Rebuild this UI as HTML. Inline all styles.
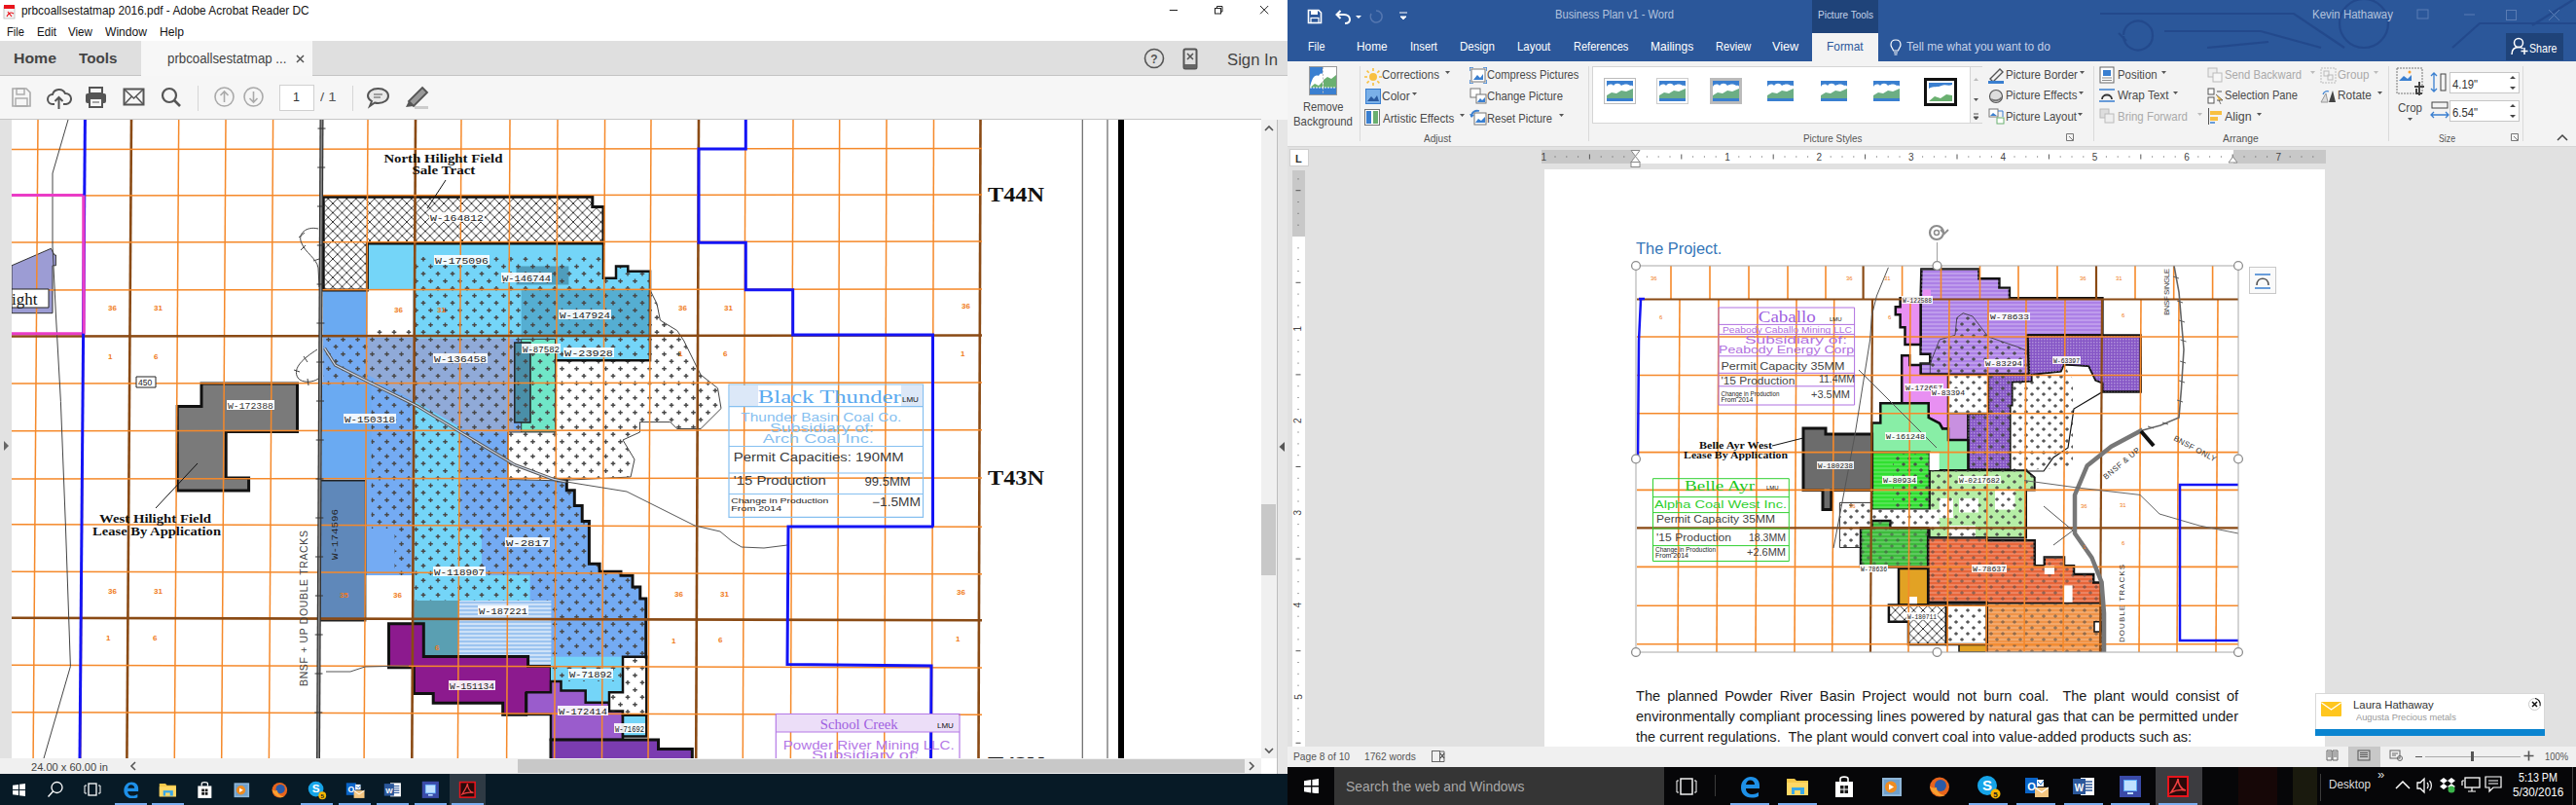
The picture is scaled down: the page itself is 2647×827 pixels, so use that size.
<!DOCTYPE html><html><head><meta charset="utf-8"><style>
html,body{margin:0;padding:0;width:2647px;height:827px;overflow:hidden;background:#fff;position:relative;font-family:"Liberation Sans",sans-serif}
div,svg{box-sizing:border-box}
</style></head><body>
<div style="position:absolute;left:0px;top:0px;width:1323px;height:42px;background:#ffffff;"></div>
<svg style="position:absolute;left:3px;top:4px;" width="14" height="16" viewBox="0 0 14 16"><rect x="1" y="3" width="11" height="12" fill="#f4f4f4" stroke="#bbb" stroke-width="0.8"/><rect x="1" y="1" width="11" height="4" fill="#e8141c"/><path d="M4 13 C6 9 8 8 11 10 M5 8 L9 13" stroke="#e8141c" stroke-width="1.2" fill="none"/></svg>
<div style="position:absolute;left:21.5px;top:5.3px;font-family:'Liberation Sans', sans-serif;font-size:12.2px;line-height:1;white-space:nowrap;color:#111;transform:scaleX(0.9720);transform-origin:0 0;">prbcoallsestatmap 2016.pdf - Adobe Acrobat Reader DC</div>
<svg style="position:absolute;left:1195px;top:0px;" width="125" height="24" viewBox="0 0 125 24"><path d="M6.8 10.5 H15" stroke="#222" stroke-width="1"/><rect x="53.5" y="8.5" width="6" height="5.5" fill="none" stroke="#222" stroke-width="1"/><path d="M55.5 8.5 V6.5 H61 V12 H59.5" fill="none" stroke="#222" stroke-width="1"/><path d="M100 6 L108.2 14.3 M108.2 6 L100 14.3" stroke="#222" stroke-width="1"/></svg>
<div style="position:absolute;left:6.5px;top:26.6px;font-family:'Liberation Sans', sans-serif;font-size:12.2px;line-height:1;white-space:nowrap;color:#111;transform:scaleX(0.9156);transform-origin:0 0;">File</div>
<div style="position:absolute;left:37.5px;top:26.6px;font-family:'Liberation Sans', sans-serif;font-size:12.2px;line-height:1;white-space:nowrap;color:#111;transform:scaleX(0.9513);transform-origin:0 0;">Edit</div>
<div style="position:absolute;left:70px;top:26.6px;font-family:'Liberation Sans', sans-serif;font-size:12.2px;line-height:1;white-space:nowrap;color:#111;transform:scaleX(0.9533);transform-origin:0 0;">View</div>
<div style="position:absolute;left:108px;top:26.6px;font-family:'Liberation Sans', sans-serif;font-size:12.2px;line-height:1;white-space:nowrap;color:#111;transform:scaleX(0.9910);transform-origin:0 0;">Window</div>
<div style="position:absolute;left:164px;top:26.6px;font-family:'Liberation Sans', sans-serif;font-size:12.2px;line-height:1;white-space:nowrap;color:#111;transform:scaleX(0.9963);transform-origin:0 0;">Help</div>
<div style="position:absolute;left:0px;top:42px;width:1323px;height:36px;background:#dfdfdf;"></div>
<div style="position:absolute;left:0px;top:77px;width:1323px;height:1px;background:#c4c4c4;"></div>
<div style="position:absolute;left:145px;top:42px;width:176px;height:36px;background:#f7f7f7;"></div>
<div style="position:absolute;left:13.5px;top:52.3px;font-family:'Liberation Sans', sans-serif;font-size:15px;line-height:1;white-space:nowrap;color:#444;transform:scaleX(1.0558);transform-origin:0 0;font-weight:bold">Home</div>
<div style="position:absolute;left:80.5px;top:52.3px;font-family:'Liberation Sans', sans-serif;font-size:15px;line-height:1;white-space:nowrap;color:#444;transform:scaleX(1.0132);transform-origin:0 0;font-weight:bold">Tools</div>
<div style="position:absolute;left:172px;top:53.1px;font-family:'Liberation Sans', sans-serif;font-size:14px;line-height:1;white-space:nowrap;color:#444;transform:scaleX(0.9476);transform-origin:0 0;">prbcoallsestatmap ...</div>
<svg style="position:absolute;left:303px;top:55px;" width="12" height="12" viewBox="0 0 12 12"><path d="M2 2 L9 9 M9 2 L2 9" stroke="#555" stroke-width="1.5"/></svg>
<svg style="position:absolute;left:1174px;top:48px;" width="24" height="24" viewBox="0 0 24 24"><circle cx="12" cy="12" r="9.5" fill="none" stroke="#555" stroke-width="1.6"/><text x="12" y="16.5" font-family="Liberation Sans" font-size="12" font-weight="bold" fill="#555" text-anchor="middle">?</text></svg>
<svg style="position:absolute;left:1214px;top:49px;" width="20" height="24" viewBox="0 0 20 24"><rect x="2.5" y="1.5" width="13" height="20" rx="1.5" fill="none" stroke="#555" stroke-width="2"/><rect x="3" y="17" width="12" height="4" fill="#666"/><path d="M6 6 L12 12 M12 6 L6 12" stroke="#555" stroke-width="1.6"/></svg>
<div style="position:absolute;left:1261px;top:53.5px;font-family:'Liberation Sans', sans-serif;font-size:16px;line-height:1;white-space:nowrap;color:#444;transform:scaleX(1.0439);transform-origin:0 0;">Sign In</div>
<div style="position:absolute;left:0px;top:78px;width:1323px;height:45px;background:#f6f6f6;"></div>
<div style="position:absolute;left:0px;top:122px;width:1296px;height:1px;background:#c6c6c6;"></div>
<svg style="position:absolute;left:10px;top:88px;" width="24" height="24" viewBox="0 0 24 24"><path d="M3 3 H17 L21 7 V21 H3 Z" fill="none" stroke="#aaa" stroke-width="1.6"/><rect x="7" y="3" width="8" height="6" fill="none" stroke="#aaa" stroke-width="1.4"/><rect x="6" y="13" width="12" height="8" fill="none" stroke="#aaa" stroke-width="1.4"/></svg>
<svg style="position:absolute;left:48px;top:88px;" width="26" height="26" viewBox="0 0 26 26"><path d="M8 19 H6 A5 5 0 0 1 6 9 A7 7 0 0 1 19 8 A5 5 0 0 1 20 19 H17" fill="none" stroke="#555" stroke-width="2"/><path d="M12.5 24 V12 M8.5 16 L12.5 12 L16.5 16" fill="none" stroke="#555" stroke-width="2"/></svg>
<svg style="position:absolute;left:86px;top:88px;" width="26" height="24" viewBox="0 0 26 24"><rect x="6" y="2" width="13" height="6" fill="none" stroke="#555" stroke-width="2"/><rect x="2" y="8" width="21" height="10" rx="2" fill="#555"/><rect x="6" y="13" width="13" height="9" fill="#f6f6f6" stroke="#555" stroke-width="2"/><path d="M9 17 H16" stroke="#555" stroke-width="1"/></svg>
<svg style="position:absolute;left:126px;top:90px;" width="24" height="20" viewBox="0 0 24 20"><rect x="1.5" y="1.5" width="20" height="16" fill="none" stroke="#555" stroke-width="2"/><path d="M2 2 L11.5 11 L21 2 M2 17 L9 9.5 M21 17 L14 9.5" fill="none" stroke="#555" stroke-width="1.5"/></svg>
<svg style="position:absolute;left:164px;top:88px;" width="24" height="24" viewBox="0 0 24 24"><circle cx="10" cy="10" r="7" fill="none" stroke="#555" stroke-width="2.2"/><path d="M15 15 L21 21" stroke="#555" stroke-width="2.6"/></svg>
<div style="position:absolute;left:203px;top:88px;width:1px;height:26px;background:#d6d6d6;"></div>
<svg style="position:absolute;left:219px;top:88px;" width="24" height="24" viewBox="0 0 24 24"><circle cx="11.5" cy="11.5" r="9.5" fill="none" stroke="#aaa" stroke-width="1.6"/><path d="M11.5 17 V6 M7.5 10 L11.5 6 L15.5 10" fill="none" stroke="#aaa" stroke-width="1.6"/></svg>
<svg style="position:absolute;left:249px;top:88px;" width="24" height="24" viewBox="0 0 24 24"><circle cx="11.5" cy="11.5" r="9.5" fill="none" stroke="#aaa" stroke-width="1.6"/><path d="M11.5 6 V17 M7.5 13 L11.5 17 L15.5 13" fill="none" stroke="#aaa" stroke-width="1.6"/></svg>
<div style="position:absolute;left:287px;top:87px;width:36px;height:27px;background:#ffffff;border:1px solid #d0d0d0"></div>
<div style="position:absolute;left:301px;top:94.4px;font-family:'Liberation Sans', sans-serif;font-size:12.5px;line-height:1;white-space:nowrap;color:#333;">1</div>
<div style="position:absolute;left:329px;top:94.4px;font-family:'Liberation Sans', sans-serif;font-size:12.5px;line-height:1;white-space:nowrap;color:#555;transform:scaleX(1.1945);transform-origin:0 0;">/ 1</div>
<div style="position:absolute;left:362px;top:88px;width:1px;height:26px;background:#d6d6d6;"></div>
<svg style="position:absolute;left:376px;top:88px;" width="26" height="24" viewBox="0 0 26 24"><path d="M12.5 3 C19 3 23 6.5 23 10.5 C23 14.5 19 18 12.5 18 C11 18 10 17.8 9 17.5 L4 21 L6 16 C3.5 14.5 2 12.7 2 10.5 C2 6.5 6 3 12.5 3 Z" fill="#e8e8e8" stroke="#555" stroke-width="2"/><path d="M8 9 H17 M8 12 H15" stroke="#555" stroke-width="1.2"/></svg>
<svg style="position:absolute;left:414px;top:88px;" width="28" height="26" viewBox="0 0 28 26"><path d="M20 2 L25 7 L11 21 L6 16 Z" fill="#999" stroke="#555" stroke-width="1.8"/><path d="M6 16 L3 22 L11 21" fill="#555"/><rect x="12" y="21" width="14" height="3" fill="#ccc"/></svg>
<div style="position:absolute;left:0px;top:123px;width:12px;height:656px;background:#e2e2e2;"></div>
<svg style="position:absolute;left:3px;top:452px;" width="8" height="12" viewBox="0 0 8 12"><path d="M1 1 L6 6 L1 11 Z" fill="#666"/></svg>
<div style="position:absolute;left:1296px;top:123px;width:16px;height:656px;background:#f0f0f0;"></div>
<div style="position:absolute;left:1296px;top:518px;width:15px;height:73px;background:#c8c8c8;"></div>
<svg style="position:absolute;left:1298px;top:127px;" width="12" height="10" viewBox="0 0 12 10"><path d="M2 7 L6 3 L10 7" fill="none" stroke="#555" stroke-width="1.6"/></svg>
<svg style="position:absolute;left:1298px;top:766px;" width="12" height="10" viewBox="0 0 12 10"><path d="M2 3 L6 7 L10 3" fill="none" stroke="#555" stroke-width="1.6"/></svg>
<div style="position:absolute;left:1312px;top:123px;width:11px;height:672px;background:#e6e6e6;"></div>
<div style="position:absolute;left:1312px;top:123px;width:1px;height:672px;background:#bdbdbd;"></div>
<svg style="position:absolute;left:1313px;top:452px;" width="10" height="14" viewBox="0 0 10 14"><path d="M7 2 L1.5 7 L7 12 Z" fill="#555"/></svg>
<div style="position:absolute;left:0px;top:779px;width:1323px;height:16px;background:#f0f0f0;"></div>
<div style="position:absolute;left:31.6px;top:782.5px;font-family:'Liberation Sans', sans-serif;font-size:11.2px;line-height:1;white-space:nowrap;color:#444;transform:scaleX(0.9911);transform-origin:0 0;">24.00 x 60.00 in</div>
<svg style="position:absolute;left:131px;top:781px;" width="12" height="12" viewBox="0 0 12 12"><path d="M8 2 L4 6 L8 10" fill="none" stroke="#555" stroke-width="1.6"/></svg>
<div style="position:absolute;left:532px;top:780px;width:747px;height:14px;background:#c8c8c8;"></div>
<svg style="position:absolute;left:1280px;top:781px;" width="12" height="12" viewBox="0 0 12 12"><path d="M4 2 L8 6 L4 10" fill="none" stroke="#555" stroke-width="1.6"/></svg>
<div style="position:absolute;left:1296px;top:779px;width:16px;height:16px;background:#ffffff;"></div>
<div style="position:absolute;left:1312px;top:779px;width:11px;height:16px;background:#e6e6e6;"></div>
<div style="position:absolute;left:1312px;top:779px;width:1px;height:16px;background:#bdbdbd;"></div>
<div style="position:absolute;left:0px;top:795px;width:1323px;height:32px;background:#071a26;"></div>
<svg style="position:absolute;left:12.5px;top:805px;" width="13" height="13" viewBox="0 0 13 13"><path d="M0 1.8 L6.0 0.9 V6.0 H0 Z M7.0 0.8 L13 0 V6.0 H7.0 Z M0 7.0 H6.0 V12.1 L0 11.2 Z M7.0 7.0 H13 V13 L7.0 12.2 Z" fill="#fff"/></svg>
<svg style="position:absolute;left:48px;top:802px;" width="18" height="18" viewBox="0 0 18 18"><circle cx="10.5" cy="7" r="5.5" fill="none" stroke="#fff" stroke-width="1.3"/><path d="M6.5 11 L1.5 16.5" stroke="#fff" stroke-width="1.4"/></svg>
<svg style="position:absolute;left:86px;top:804px;" width="18" height="14" viewBox="0 0 18 14"><rect x="5" y="1" width="8" height="12" fill="none" stroke="#fff" stroke-width="1.3"/><path d="M3 3 H1 V11 H3 M15 3 H17 V11 H15" fill="none" stroke="#fff" stroke-width="1"/></svg>
<div style="position:absolute;left:462px;top:795px;width:37px;height:32px;background:#2e3a44;"></div>
<svg style="position:absolute;left:124.6px;top:801.5px;" width="18.7" height="18.7" viewBox="0 0 24 24"><path d="M3 13 C3 6 8 2 13 2 C19 2 22 6 22 11 V14 H8 C8 18 11 20 15 20 C17 20 19 19 21 18 V22 C19 23 17 23.5 14 23.5 C7 23.5 3 19 3 13 Z M8 10 H17 C17 7 15 5.5 12.5 5.5 C10 5.5 8.5 7.5 8 10 Z" fill="#1e90e8"/></svg>
<svg style="position:absolute;left:162.6px;top:801.5px;" width="18.7" height="18.7" viewBox="0 0 24 24"><path d="M1 4 H9 L11 6 H23 V21 H1 Z" fill="#f5c84a"/><rect x="1" y="8" width="22" height="13" fill="#ffd866"/><rect x="6" y="13" width="13" height="7" fill="#3aa8e8"/><rect x="9" y="16" width="6" height="4" fill="#ffd866"/></svg>
<svg style="position:absolute;left:200.6px;top:801.5px;" width="18.7" height="18.7" viewBox="0 0 24 24"><path d="M3 7 H21 V23 H3 Z" fill="#fff"/><path d="M8 7 V4 C8 1.5 16 1.5 16 4 V7" fill="none" stroke="#fff" stroke-width="1.6"/><path d="M8 11 H11.5 V14.5 H8 Z M12.5 11 H16 V14.5 H12.5 Z M8 15.5 H11.5 V19 H8 Z M12.5 15.5 H16 V19 H12.5 Z" fill="#1a1a1a"/></svg>
<svg style="position:absolute;left:238.6px;top:801.5px;" width="18.7" height="18.7" viewBox="0 0 24 24"><rect x="2" y="3" width="20" height="19" fill="#8fb6d8"/><rect x="4" y="5" width="16" height="15" fill="#6fa0cc"/><circle cx="11" cy="12.5" r="6" fill="#f08c20"/><path d="M9 9.5 L14 12.5 L9 15.5 Z" fill="#fff"/></svg>
<svg style="position:absolute;left:277.6px;top:801.5px;" width="18.7" height="18.7" viewBox="0 0 24 24"><circle cx="12" cy="12.5" r="10" fill="#e8641c"/><circle cx="13" cy="11" r="6" fill="#2a5aa8"/><path d="M2 12 C4 20 12 24 18 21 C14 21 9 18 9 13 C6 14 4 13 2 12 Z" fill="#f8a030"/></svg>
<svg style="position:absolute;left:316.1px;top:801.5px;" width="20.3" height="20.3" viewBox="0 0 26 26"><circle cx="11" cy="11" r="10" fill="#16a4e8"/><text x="11" y="16" font-family="Liberation Sans" font-size="15" font-weight="bold" fill="#fff" text-anchor="middle">S</text><circle cx="19.5" cy="19.5" r="5" fill="#f7b400"/><text x="19.5" y="22.5" font-family="Liberation Sans" font-size="8" font-weight="bold" fill="#222" text-anchor="middle">5</text></svg>
<svg style="position:absolute;left:355.1px;top:801.5px;" width="20.3" height="18.7" viewBox="0 0 26 24"><rect x="1" y="3" width="13" height="16" fill="#0a64c8"/><text x="7.5" y="15.5" font-family="Liberation Sans" font-size="11" font-weight="bold" fill="#fff" text-anchor="middle">O</text><rect x="13" y="5" width="7" height="7" fill="#fff"/><path d="M14 7 L17 10 L20 6" stroke="#0a64c8" fill="none"/><rect x="11" y="13" width="14" height="10" fill="#f4c680"/><path d="M11 13 L18 18 L25 13" stroke="#fff" fill="none" stroke-width="1.2"/></svg>
<svg style="position:absolute;left:394.0px;top:801.5px;" width="18.7" height="18.7" viewBox="0 0 24 24"><rect x="9" y="3" width="14" height="18" fill="#fff"/><path d="M11 7 H21 M11 10 H21 M11 13 H21 M11 16 H21" stroke="#2b579a" stroke-width="1.4"/><rect x="1" y="4" width="13" height="16" fill="#2b579a"/><text x="7.5" y="16.5" font-family="Liberation Sans" font-size="10" font-weight="bold" fill="#fff" text-anchor="middle">W</text></svg>
<svg style="position:absolute;left:432.6px;top:801.5px;" width="18.7" height="18.7" viewBox="0 0 24 24"><rect x="1" y="1" width="22" height="22" fill="#3a4aa8"/><rect x="5" y="5" width="14" height="12" fill="#5aa8f8"/><rect x="6" y="6" width="12" height="10" fill="#bfe0ff"/><path d="M9 19 H15" stroke="#bfe0ff" stroke-width="2"/></svg>
<svg style="position:absolute;left:470.6px;top:801.5px;" width="18.7" height="18.7" viewBox="0 0 24 24"><rect x="1" y="1" width="22" height="22" fill="#e8141c"/><rect x="3" y="3" width="18" height="18" fill="#2a0a0a"/><path d="M5 18 C9 12 12 6 12 4 C12 9 15 15 20 16 C15 15 9 16 5 18 Z" fill="none" stroke="#f04040" stroke-width="1.6"/></svg>
<div style="position:absolute;left:117.5px;top:825px;width:33px;height:2px;background:#7aaef0;"></div>
<div style="position:absolute;left:155.5px;top:825px;width:33px;height:2px;background:#7aaef0;"></div>
<div style="position:absolute;left:309.0px;top:825px;width:33px;height:2px;background:#7aaef0;"></div>
<div style="position:absolute;left:348.0px;top:825px;width:33px;height:2px;background:#7aaef0;"></div>
<div style="position:absolute;left:386.9px;top:825px;width:33px;height:2px;background:#7aaef0;"></div>
<div style="position:absolute;left:425.5px;top:825px;width:33px;height:2px;background:#7aaef0;"></div>
<div style="position:absolute;left:463.5px;top:825px;width:33px;height:2px;background:#7aaef0;"></div>
<svg style="position:absolute;left:12px;top:123px;overflow:hidden" width="1284" height="656" viewBox="12 123 1284 656"><defs>
<pattern id="Lcross" width="15" height="15" patternUnits="userSpaceOnUse">
<path d="M7.5 1.5 V6 M5.2 3.75 H9.8 M0 9 V13.5 M-2.3 11.25 H2.3 M15 9 V13.5 M12.7 11.25 H17.3" stroke="#484848" stroke-width="1.5"/></pattern>
<pattern id="Lhatch" width="9.5" height="9.5" patternUnits="userSpaceOnUse">
<path d="M0 0 L9.5 9.5 M9.5 0 L0 9.5" stroke="#222" stroke-width="0.9"/></pattern>
<pattern id="Lstripe" width="6" height="4" patternUnits="userSpaceOnUse">
<path d="M0 1 H6" stroke="#ffffff" stroke-width="1"/></pattern>
<pattern id="Ldots" width="3" height="3" patternUnits="userSpaceOnUse">
<rect x="0" y="0" width="1.5" height="1.5" fill="#ffffff" opacity="0.7"/></pattern>
</defs><rect x="12" y="123" width="1284" height="656" fill="#fff"/><polygon points="12.0,272.8 52.4,255.3 56.0,262.0 57.4,262.0 57.4,272.8 54.0,272.8 54.0,321.7 12.0,321.7" fill="#9c9cd4" stroke="#333" stroke-width="1" /><polygon points="207.0,394.0 305.5,394.0 305.5,443.5 232.2,443.5 232.2,491.0 255.6,491.0 255.6,503.9 182.2,503.9 182.2,417.6 207.0,417.6" fill="#7a7a7a" stroke="#111" stroke-width="3" /><polygon points="332.2,297.9 377.4,297.9 377.4,250.0 620.0,250.0 620.0,285.7 633.0,285.7 633.0,273.5 645.3,273.5 645.3,278.7 668.0,278.7 668.0,370.2 570.5,370.2 570.5,444.0 521.7,444.0 521.7,492.4 570.4,493.8 582.3,493.8 582.3,503.7 590.3,503.7 590.3,519.6 598.2,519.6 598.2,535.5 605.4,535.5 605.4,579.2 616.1,579.2 616.1,587.2 638.0,587.2 638.0,591.2 650.0,591.2 650.0,603.1 657.8,603.1 657.8,615.0 663.8,615.0 663.8,676.6 566.4,676.6 566.4,682.6 471.0,682.6 471.0,674.6 425.3,674.6 425.3,591.0 375.6,591.0 375.6,492.4 330.5,492.4" fill="#74abf3" stroke="none" stroke-width="0" /><polygon points="377.4,250.0 620.0,250.0 620.0,285.7 633.0,285.7 633.0,273.5 645.3,273.5 645.3,278.7 668.0,278.7 668.0,370.2 570.5,370.2 570.5,348.0 424.4,348.0 424.4,297.9 377.4,297.9" fill="#74d5f8" stroke="none" stroke-width="0" /><polygon points="535.7,297.9 668.0,297.9 668.0,346.6 535.7,346.6" fill="#55aed2" stroke="none" stroke-width="0" /><polygon points="530.5,273.5 584.4,273.5 584.4,292.6 530.5,292.6" fill="#4f9dbc" stroke="none" stroke-width="0" /><polygon points="377.4,297.9 424.4,297.9 424.4,346.6 377.4,346.6" fill="#ffffff" stroke="none" stroke-width="0" /><polygon points="332.2,297.9 377.4,297.9 377.4,346.6 332.2,346.6" fill="#6aaaf2" stroke="none" stroke-width="0" /><polygon points="330.5,395.5 381.5,395.5 381.5,492.4 330.5,492.4" fill="#6aaaf2" stroke="none" stroke-width="0" /><polygon points="377.0,347.8 528.0,347.8 528.0,444.6 484.0,444.6 377.0,384.6" fill="#90aad8" stroke="none" stroke-width="0" /><polygon points="424.6,411.6 473.2,439.2 473.2,543.5 494.9,543.5 494.9,591.0 544.6,591.0 544.6,617.0 425.3,617.0" fill="#74d5f8" stroke="none" stroke-width="0" /><polygon points="535.7,348.3 570.5,348.3 570.5,444.0 535.7,444.0" fill="#70e6c8" stroke="#333" stroke-width="1" /><polygon points="528.8,352.0 545.0,352.0 545.0,434.0 528.8,434.0" fill="#4a8fa8" stroke="#222" stroke-width="1.5" /><polygon points="328.7,493.8 375.6,493.8 375.6,637.7 328.7,637.7" fill="#5f88ba" stroke="#222" stroke-width="1.5" /><polygon points="471.0,617.0 566.4,617.0 566.4,682.6 471.0,682.6" fill="#9cc4f0" stroke="none" stroke-width="0" /><polygon points="471.0,617.0 566.4,617.0 566.4,682.6 471.0,682.6" fill="url(#Lstripe)" stroke="none" stroke-width="0" /><polygon points="425.3,617.0 471.0,617.0 471.0,674.6 425.3,674.6" fill="#5a9fb2" stroke="none" stroke-width="0" /><polygon points="332.2,346.6 668.0,346.6 668.0,370.2 570.5,370.2 570.5,444.0 521.7,444.0 521.7,492.4 570.4,493.8 582.3,493.8 582.3,503.7 590.3,503.7 590.3,519.6 598.2,519.6 598.2,535.5 605.4,535.5 605.4,579.2 616.1,579.2 616.1,587.2 638.0,587.2 638.0,591.2 650.0,591.2 650.0,603.1 657.8,603.1 657.8,615.0 663.8,615.0 663.8,676.6 566.4,676.6 566.4,617.0 425.3,617.0 425.3,591.0 405.5,591.0 405.5,543.0 381.5,543.0 381.5,395.5 332.2,395.5" fill="url(#Lcross)" stroke="none" stroke-width="0" /><polygon points="424.4,262.0 620.0,262.0 620.0,285.7 633.0,285.7 633.0,273.5 645.3,273.5 645.3,278.7 668.0,278.7 668.0,346.6 424.4,346.6" fill="url(#Lcross)" stroke="none" stroke-width="0" /><polygon points="570.5,370.2 668.0,370.2 668.0,298.0 675.0,312.0 678.4,329.0 695.8,339.6 702.7,350.0 720.0,385.0 737.5,398.8 741.0,419.6 720.0,440.5 695.8,440.5 688.8,433.6 657.5,433.6 657.5,444.0 640.0,452.0 652.0,472.0 648.0,490.0 570.4,493.8 521.7,492.4 521.7,444.0 570.5,444.0" fill="#ffffff" stroke="#444" stroke-width="1" /><polygon points="570.5,370.2 668.0,370.2 668.0,298.0 675.0,312.0 678.4,329.0 695.8,339.6 702.7,350.0 720.0,385.0 737.5,398.8 741.0,419.6 720.0,440.5 695.8,440.5 688.8,433.6 657.5,433.6 657.5,444.0 640.0,452.0 652.0,472.0 648.0,490.0 570.4,493.8 521.7,492.4 521.7,444.0 570.5,444.0" fill="url(#Lcross)" stroke="none" stroke-width="0" /><polygon points="377.4,337.0 424.4,337.0 424.4,346.6 377.4,346.6" fill="url(#Lcross)" stroke="none" stroke-width="0" /><polygon points="399.5,640.8 435.3,640.8 435.3,674.6 542.6,674.6 542.6,684.6 566.4,684.6 566.4,712.4 540.6,712.4 540.6,734.2 516.7,734.2 516.7,722.3 445.2,722.3 445.2,712.4 425.3,712.4 425.3,685.8 399.5,685.8" fill="#8c1a8e" stroke="#111" stroke-width="3" /><polygon points="566.0,674.8 664.3,674.8 664.3,700.0 640.0,700.0 640.0,711.3 626.0,711.3 626.0,721.7 601.7,721.7 601.7,709.6 576.5,709.6 576.5,700.0 566.0,700.0" fill="#74d5f8" stroke="none" stroke-width="0" /><polygon points="566.0,684.0 640.0,684.0 640.0,700.0 566.0,700.0" fill="url(#Lcross)" stroke="none" stroke-width="0" /><polygon points="541.0,711.3 566.0,711.3 566.0,700.0 576.5,700.0 576.5,709.6 601.7,709.6 601.7,721.7 626.0,721.7 626.0,730.4 640.0,730.4 640.0,760.0 566.0,760.0 566.0,734.0 541.0,734.0" fill="#9a5ccc" stroke="#111" stroke-width="2.5" /><polygon points="640.0,674.8 664.3,674.8 664.3,734.8 640.0,734.8 640.0,730.4 626.0,730.4 626.0,711.3 640.0,711.3" fill="#ffffff" stroke="#111" stroke-width="2.5" /><polygon points="640.0,674.8 664.3,674.8 664.3,734.8 640.0,734.8 640.0,730.4 626.0,730.4 626.0,711.3 640.0,711.3" fill="url(#Lcross)" stroke="none" stroke-width="0" /><polygon points="640.0,734.8 664.3,734.8 664.3,756.5 640.0,756.5" fill="#74d5f8" stroke="#111" stroke-width="2.5" /><polygon points="566.0,760.0 676.5,760.0 676.5,769.6 711.3,769.6 711.3,781.0 566.0,781.0" fill="#7b3cb0" stroke="#111" stroke-width="3" /><polygon points="332.2,202.2 608.8,202.2 608.8,212.6 620.0,212.6 620.0,250.0 377.4,250.0 377.4,297.9 332.2,297.9" fill="#ffffff" stroke="none" stroke-width="0" /><polygon points="332.2,202.2 608.8,202.2 608.8,212.6 620.0,212.6 620.0,250.0 377.4,250.0 377.4,297.9 332.2,297.9" fill="url(#Lhatch)" stroke="#111" stroke-width="3" /><polyline points="620.0,250.0 620.0,285.7 633.0,285.7 633.0,273.5 645.3,273.5 645.3,278.7 668.0,278.7 668.0,370.2 570.5,370.2" fill="none" stroke="#111" stroke-width="2.5" /><polyline points="570.4,493.8 582.3,493.8 582.3,503.7 590.3,503.7 590.3,519.6 598.2,519.6 598.2,535.5 605.4,535.5 605.4,579.2 616.1,579.2 616.1,587.2 638.0,587.2 638.0,591.2 650.0,591.2 650.0,603.1 657.8,603.1 657.8,615.0 663.8,615.0 663.8,676.6" fill="none" stroke="#111" stroke-width="3" /><path d="M39.0 123 L34.1 779" stroke="#f5892a" stroke-width="1.5"/><path d="M87.4 123 L82.7 779" stroke="#f5892a" stroke-width="1.5"/><path d="M135.0 123 L130.4 779" stroke="#8a4a14" stroke-width="2.6"/><path d="M183.7 123 L179.3 779" stroke="#f5892a" stroke-width="1.5"/><path d="M232.0 123 L227.7 779" stroke="#f5892a" stroke-width="1.5"/><path d="M280.6 123 L276.4 779" stroke="#f5892a" stroke-width="1.5"/><path d="M378.0 123 L374.1 779" stroke="#f5892a" stroke-width="1.5"/><path d="M427.0 123 L423.3 779" stroke="#8a4a14" stroke-width="2.6"/><path d="M474.0 123 L470.4 779" stroke="#f5892a" stroke-width="1.5"/><path d="M524.0 123 L520.6 779" stroke="#f5892a" stroke-width="1.5"/><path d="M573.0 123 L569.7 779" stroke="#f5892a" stroke-width="1.5"/><path d="M621.6 123 L618.5 779" stroke="#f5892a" stroke-width="1.5"/><path d="M669.0 123 L666.0 779" stroke="#f5892a" stroke-width="1.5"/><path d="M718.0 123 L715.2 779" stroke="#8a4a14" stroke-width="2.6"/><path d="M766.0 123 L763.3 779" stroke="#f5892a" stroke-width="1.5"/><path d="M815.0 123 L812.4 779" stroke="#f5892a" stroke-width="1.5"/><path d="M862.7 123 L860.3 779" stroke="#f5892a" stroke-width="1.5"/><path d="M911.0 123 L908.7 779" stroke="#f5892a" stroke-width="1.5"/><path d="M959.5 123 L957.4 779" stroke="#f5892a" stroke-width="1.5"/><path d="M1007.5 123 L1005.5 779" stroke="#8a4a14" stroke-width="2.6"/><path d="M12 153.5 L1009 152.5" stroke="#f5892a" stroke-width="1.5"/><path d="M12 200.9 L1009 199.9" stroke="#f5892a" stroke-width="1.5"/><path d="M12 249.1 L1009 248.1" stroke="#f5892a" stroke-width="1.5"/><path d="M12 298.0 L1009 297.0" stroke="#f5892a" stroke-width="1.5"/><path d="M12 345.5 L1009 344.5" stroke="#8a4a14" stroke-width="2.6"/><path d="M12 394.0 L1009 393.0" stroke="#f5892a" stroke-width="1.5"/><path d="M12 442.8 L1009 441.8" stroke="#f5892a" stroke-width="1.5"/><path d="M12 491.9 L1009 490.9" stroke="#f5892a" stroke-width="1.5"/><path d="M12 538.7 L1009 541.3" stroke="#f5892a" stroke-width="1.5"/><path d="M12 587.2 L1009 589.8" stroke="#f5892a" stroke-width="1.5"/><path d="M12 634.7 L1009 637.3" stroke="#8a4a14" stroke-width="2.6"/><path d="M12 683.3 L1009 685.9" stroke="#f5892a" stroke-width="1.5"/><path d="M12 731.7 L1009 734.3" stroke="#f5892a" stroke-width="1.5"/><polyline points="70.0,123.0 54.0,178.0 54.0,253.0 57.4,323.0 62.4,412.6 67.4,540.0 72.4,684.6 45.0,779.0" fill="none" stroke="#444" stroke-width="1" /><polyline points="333.5,357.6 344.5,375.0 379.4,392.6 429.4,417.5 479.0,447.5 529.0,477.5 569.0,492.4 581.6,495.0" fill="none" stroke="#555" stroke-width="3.2" /><polyline points="333.5,357.6 344.5,375.0 379.4,392.6 429.4,417.5 479.0,447.5 529.0,477.5 569.0,492.4 581.6,495.0" fill="none" stroke="#cfd8e8" stroke-width="1.2" /><polyline points="582.0,495.0 644.0,505.0 714.0,540.0 740.0,546.0 752.0,556.0 762.0,562.0 785.0,563.0 809.0,560.0" fill="none" stroke="#555" stroke-width="1" /><polyline points="335.0,690.0 360.0,690.0 375.0,685.0 420.0,684.0" fill="none" stroke="#555" stroke-width="1" /><path d="M327 235 C315 232 305 240 310 250 C314 260 325 265 327 275 L328 295" fill="none" stroke="#444" stroke-width="1"/><path d="M307 244 L313 239 M309 257 L314 252 M322 268 L328 266" stroke="#444" stroke-width="1"/><path d="M326 359 C312 368 300 378 306 388 C310 394 322 393 327 389" fill="none" stroke="#444" stroke-width="1"/><path d="M312 366 L316 372 M302 380 L308 382 M316 389 L317 396" stroke="#444" stroke-width="1"/><path d="M330.5 123 L327 779" stroke="#333" stroke-width="4"/><path d="M330.5 123 L327 779" stroke="#888" stroke-width="1.6"/><path d="M326.5 132 H334.5" stroke="#333" stroke-width="1"/><path d="M326.2 172 H334.2" stroke="#333" stroke-width="1"/><path d="M326.0 212 H334.0" stroke="#333" stroke-width="1"/><path d="M325.8 252 H333.8" stroke="#333" stroke-width="1"/><path d="M325.6 292 H333.6" stroke="#333" stroke-width="1"/><path d="M325.4 332 H333.4" stroke="#333" stroke-width="1"/><path d="M325.2 372 H333.2" stroke="#333" stroke-width="1"/><path d="M325.0 412 H333.0" stroke="#333" stroke-width="1"/><path d="M324.7 452 H332.7" stroke="#333" stroke-width="1"/><path d="M324.5 492 H332.5" stroke="#333" stroke-width="1"/><path d="M324.3 532 H332.3" stroke="#333" stroke-width="1"/><path d="M324.1 572 H332.1" stroke="#333" stroke-width="1"/><path d="M323.9 612 H331.9" stroke="#333" stroke-width="1"/><path d="M323.7 652 H331.7" stroke="#333" stroke-width="1"/><path d="M323.5 692 H331.5" stroke="#333" stroke-width="1"/><path d="M323.3 732 H331.3" stroke="#333" stroke-width="1"/><polyline points="12.0,200.5 86.0,200.5 86.0,342.7 12.0,342.7" fill="none" stroke="#ea3cc6" stroke-width="3" /><path d="M87.4 123 L82 779" stroke="#1414f5" stroke-width="3"/><polyline points="86.0,200.5 86.0,342.7" fill="none" stroke="#ea3cc6" stroke-width="3" /><polyline points="766.3,123.0 766.3,153.0 718.0,153.0 718.0,249.3 766.3,249.3 766.3,297.7 814.7,297.7 814.7,344.0 958.5,344.0 958.5,540.0 958.0,541.0 810.0,541.0 809.0,682.6 957.0,684.0 956.5,779.0" fill="none" stroke="#1414f5" stroke-width="3" /><polygon points="12.0,297.0 50.0,297.0 50.0,316.0 12.0,316.0" fill="#ffffff" stroke="#222" stroke-width="1" /><text x="12.0" y="313.0" font-family="Liberation Serif" font-size="17" fill="#111" >ight</text><polygon points="233.0,411.0 282.0,411.0 282.0,421.0 233.0,421.0" fill="#ffffff" stroke="none" stroke-width="0" /><text x="234.0" y="420.0" font-family="Liberation Mono" font-size="9.5" fill="#333" textLength="47" lengthAdjust="spacingAndGlyphs">W-172388</text><polygon points="441.0,218.0 498.0,218.0 498.0,228.0 441.0,228.0" fill="#ffffff" stroke="none" stroke-width="0" opacity="0.9"/><text x="442.0" y="227.0" font-family="Liberation Mono" font-size="9.5" fill="#222" textLength="55" lengthAdjust="spacingAndGlyphs">W-164812</text><polygon points="446.0,262.0 503.0,262.0 503.0,272.0 446.0,272.0" fill="#ffffff" stroke="none" stroke-width="0" opacity="0.9"/><text x="447.0" y="271.0" font-family="Liberation Mono" font-size="9.5" fill="#222" textLength="55" lengthAdjust="spacingAndGlyphs">W-175096</text><polygon points="515.0,280.0 567.0,280.0 567.0,290.0 515.0,290.0" fill="#ffffff" stroke="none" stroke-width="0" opacity="0.9"/><text x="516.0" y="289.0" font-family="Liberation Mono" font-size="9.5" fill="#222" textLength="50" lengthAdjust="spacingAndGlyphs">W-146744</text><polygon points="574.0,318.0 628.0,318.0 628.0,328.0 574.0,328.0" fill="#ffffff" stroke="none" stroke-width="0" opacity="0.9"/><text x="575.0" y="327.0" font-family="Liberation Mono" font-size="9.5" fill="#222" textLength="52" lengthAdjust="spacingAndGlyphs">W-147924</text><polygon points="445.0,363.0 501.0,363.0 501.0,373.0 445.0,373.0" fill="#ffffff" stroke="none" stroke-width="0" opacity="0.9"/><text x="446.0" y="372.0" font-family="Liberation Mono" font-size="9.5" fill="#222" textLength="54" lengthAdjust="spacingAndGlyphs">W-136458</text><polygon points="579.0,357.0 631.0,357.0 631.0,367.0 579.0,367.0" fill="#ffffff" stroke="none" stroke-width="0" opacity="0.9"/><text x="580.0" y="366.0" font-family="Liberation Mono" font-size="9.5" fill="#222" textLength="50" lengthAdjust="spacingAndGlyphs">W-23928</text><polygon points="536.0,353.0 576.0,353.0 576.0,363.0 536.0,363.0" fill="#ffffff" stroke="none" stroke-width="0" opacity="0.9"/><text x="537.0" y="362.0" font-family="Liberation Mono" font-size="9.5" fill="#222" textLength="38" lengthAdjust="spacingAndGlyphs">W-87582</text><polygon points="353.0,425.0 407.0,425.0 407.0,435.0 353.0,435.0" fill="#ffffff" stroke="none" stroke-width="0" opacity="0.9"/><text x="354.0" y="434.0" font-family="Liberation Mono" font-size="9.5" fill="#222" textLength="52" lengthAdjust="spacingAndGlyphs">W-150318</text><polygon points="519.0,552.0 565.0,552.0 565.0,562.0 519.0,562.0" fill="#ffffff" stroke="none" stroke-width="0" opacity="0.9"/><text x="520.0" y="561.0" font-family="Liberation Mono" font-size="9.5" fill="#222" textLength="44" lengthAdjust="spacingAndGlyphs">W-2817</text><polygon points="445.0,582.0 499.0,582.0 499.0,592.0 445.0,592.0" fill="#ffffff" stroke="none" stroke-width="0" opacity="0.9"/><text x="446.0" y="591.0" font-family="Liberation Mono" font-size="9.5" fill="#222" textLength="52" lengthAdjust="spacingAndGlyphs">W-118907</text><polygon points="491.0,622.0 543.0,622.0 543.0,632.0 491.0,632.0" fill="#ffffff" stroke="none" stroke-width="0" opacity="0.9"/><text x="492.0" y="631.0" font-family="Liberation Mono" font-size="9.5" fill="#222" textLength="50" lengthAdjust="spacingAndGlyphs">W-187221</text><polygon points="461.0,699.0 509.0,699.0 509.0,709.0 461.0,709.0" fill="#ffffff" stroke="none" stroke-width="0" opacity="0.9"/><text x="462.0" y="708.0" font-family="Liberation Mono" font-size="9.5" fill="#222" textLength="46" lengthAdjust="spacingAndGlyphs">W-151134</text><polygon points="584.0,687.0 630.0,687.0 630.0,697.0 584.0,697.0" fill="#ffffff" stroke="none" stroke-width="0" opacity="0.9"/><text x="585.0" y="696.0" font-family="Liberation Mono" font-size="9.5" fill="#222" textLength="44" lengthAdjust="spacingAndGlyphs">W-71892</text><polygon points="573.0,725.0 625.0,725.0 625.0,735.0 573.0,735.0" fill="#ffffff" stroke="none" stroke-width="0" opacity="0.9"/><text x="574.0" y="734.0" font-family="Liberation Mono" font-size="9.5" fill="#222" textLength="50" lengthAdjust="spacingAndGlyphs">W-172414</text><polygon points="631.0,743.0 663.0,743.0 663.0,753.0 631.0,753.0" fill="#ffffff" stroke="none" stroke-width="0" opacity="0.9"/><text x="632.0" y="752.0" font-family="Liberation Mono" font-size="9.5" fill="#222" textLength="30" lengthAdjust="spacingAndGlyphs">W-71692</text><text x="0" y="0" font-family="Liberation Mono" font-size="9" fill="#222" transform="translate(347 575) rotate(-90)" textLength="52" lengthAdjust="spacingAndGlyphs">W-174596</text><text x="394.4" y="167.0" font-family="Liberation Serif" font-size="12.5" fill="#111" font-weight="bold" textLength="122" lengthAdjust="spacingAndGlyphs">North Hilight Field</text><text x="423.4" y="179.4" font-family="Liberation Serif" font-size="12.5" fill="#111" font-weight="bold" textLength="65" lengthAdjust="spacingAndGlyphs">Sale Tract</text><path d="M458 185 L439 214" stroke="#111" stroke-width="1"/><text x="102.0" y="537.3" font-family="Liberation Serif" font-size="12.5" fill="#111" font-weight="bold" textLength="115" lengthAdjust="spacingAndGlyphs">West Hilight Field</text><text x="95.0" y="550.0" font-family="Liberation Serif" font-size="12.5" fill="#111" font-weight="bold" textLength="132" lengthAdjust="spacingAndGlyphs">Lease By Application</text><path d="M160 522 L203 476" stroke="#111" stroke-width="1"/><text x="1015.0" y="207.0" font-family="Liberation Serif" font-size="22" fill="#111" font-weight="bold" textLength="58" lengthAdjust="spacingAndGlyphs">T44N</text><text x="1015.0" y="498.0" font-family="Liberation Serif" font-size="22" fill="#111" font-weight="bold" textLength="58" lengthAdjust="spacingAndGlyphs">T43N</text><text x="1015.0" y="792.0" font-family="Liberation Serif" font-size="22" fill="#111" font-weight="bold" textLength="58" lengthAdjust="spacingAndGlyphs">T42N</text><polygon points="140.0,387.0 160.0,387.0 160.0,398.0 140.0,398.0" fill="#fff" stroke="#222" stroke-width="1" /><text x="142.0" y="396.0" font-family="Liberation Sans" font-size="8.5" fill="#222" >450</text><text x="0" y="0" font-family="Liberation Sans" font-size="10.5" fill="#444" transform="translate(316 705) rotate(-90)" textLength="160" lengthAdjust="spacing">BNSF  +  UP  DOUBLE  TRACKS</text><text x="111.0" y="319.0" font-family="Liberation Sans" font-size="8" fill="#f07a20" font-weight="bold">36</text><text x="158.0" y="319.0" font-family="Liberation Sans" font-size="8" fill="#f07a20" font-weight="bold">31</text><text x="111.0" y="369.0" font-family="Liberation Sans" font-size="8" fill="#f07a20" font-weight="bold">1</text><text x="158.0" y="369.0" font-family="Liberation Sans" font-size="8" fill="#f07a20" font-weight="bold">6</text><text x="405.0" y="321.0" font-family="Liberation Sans" font-size="8" fill="#f07a20" font-weight="bold">36</text><text x="697.0" y="319.0" font-family="Liberation Sans" font-size="8" fill="#f07a20" font-weight="bold">36</text><text x="744.0" y="319.0" font-family="Liberation Sans" font-size="8" fill="#f07a20" font-weight="bold">31</text><text x="988.0" y="317.0" font-family="Liberation Sans" font-size="8" fill="#f07a20" font-weight="bold">36</text><text x="743.0" y="366.0" font-family="Liberation Sans" font-size="8" fill="#f07a20" font-weight="bold">6</text><text x="987.0" y="366.0" font-family="Liberation Sans" font-size="8" fill="#f07a20" font-weight="bold">1</text><text x="697.0" y="366.0" font-family="Liberation Sans" font-size="8" fill="#f07a20" font-weight="bold">1</text><text x="111.0" y="610.0" font-family="Liberation Sans" font-size="8" fill="#f07a20" font-weight="bold">36</text><text x="158.0" y="610.0" font-family="Liberation Sans" font-size="8" fill="#f07a20" font-weight="bold">31</text><text x="109.0" y="658.0" font-family="Liberation Sans" font-size="8" fill="#f07a20" font-weight="bold">1</text><text x="157.0" y="658.0" font-family="Liberation Sans" font-size="8" fill="#f07a20" font-weight="bold">6</text><text x="349.0" y="614.0" font-family="Liberation Sans" font-size="8" fill="#f07a20" font-weight="bold">35</text><text x="404.0" y="614.0" font-family="Liberation Sans" font-size="8" fill="#f07a20" font-weight="bold">36</text><text x="693.0" y="613.0" font-family="Liberation Sans" font-size="8" fill="#f07a20" font-weight="bold">36</text><text x="740.0" y="613.0" font-family="Liberation Sans" font-size="8" fill="#f07a20" font-weight="bold">31</text><text x="983.0" y="611.0" font-family="Liberation Sans" font-size="8" fill="#f07a20" font-weight="bold">36</text><text x="690.0" y="661.0" font-family="Liberation Sans" font-size="8" fill="#f07a20" font-weight="bold">1</text><text x="738.0" y="660.0" font-family="Liberation Sans" font-size="8" fill="#f07a20" font-weight="bold">6</text><text x="982.0" y="659.0" font-family="Liberation Sans" font-size="8" fill="#f07a20" font-weight="bold">1</text><text x="449.0" y="321.0" font-family="Liberation Sans" font-size="8" fill="#f07a20" font-weight="bold">31</text><text x="447.0" y="668.0" font-family="Liberation Sans" font-size="8" fill="#f07a20" font-weight="bold">6</text><polygon points="749.0,395.0 948.5,395.0 948.5,531.3 749.0,531.3" fill="none" stroke="#86c0f0" stroke-width="1.2" /><polygon points="750.0,396.0 779.0,396.0 779.0,417.0 750.0,417.0" fill="#dce8f8" stroke="none" stroke-width="0" /><polygon points="926.0,396.0 948.0,396.0 948.0,417.0 926.0,417.0" fill="#dce8f8" stroke="none" stroke-width="0" /><path d="M749 417.6 H948.5" stroke="#86c0f0" stroke-width="1.2"/><path d="M749 458.5 H948.5" stroke="#86c0f0" stroke-width="1.2"/><path d="M749 486 H948.5" stroke="#86c0f0" stroke-width="1.2"/><path d="M749 507.5 H948.5" stroke="#86c0f0" stroke-width="1.2"/><text x="778.8" y="413.6" font-family="Liberation Serif" font-size="19" fill="#5aaaf0" textLength="147" lengthAdjust="spacingAndGlyphs">Black Thunder</text><text x="927.0" y="413.0" font-family="Liberation Sans" font-size="8" fill="#111" >LMU</text><text x="761.3" y="432.5" font-family="Liberation Sans" font-size="12.5" fill="#86c0f0" textLength="165" lengthAdjust="spacingAndGlyphs">Thunder Basin Coal Co.</text><text x="791.0" y="443.5" font-family="Liberation Sans" font-size="12.5" fill="#86c0f0" textLength="107" lengthAdjust="spacingAndGlyphs">Subsidiary of:</text><text x="783.8" y="455.0" font-family="Liberation Sans" font-size="12.5" fill="#86c0f0" textLength="114" lengthAdjust="spacingAndGlyphs">Arch Coal Inc.</text><text x="753.8" y="474.0" font-family="Liberation Sans" font-size="12" fill="#3a3a3a" textLength="175" lengthAdjust="spacingAndGlyphs">Permit Capacities:  190MM</text><text x="753.8" y="498.0" font-family="Liberation Sans" font-size="12" fill="#3a3a3a" textLength="95" lengthAdjust="spacingAndGlyphs">'15  Production</text><text x="888.6" y="499.0" font-family="Liberation Sans" font-size="12" fill="#3a3a3a" textLength="47" lengthAdjust="spacingAndGlyphs">99.5MM</text><text x="751.3" y="517.4" font-family="Liberation Sans" font-size="8" fill="#222" textLength="100" lengthAdjust="spacingAndGlyphs">Change in Production</text><text x="751.3" y="525.0" font-family="Liberation Sans" font-size="8" fill="#222" textLength="52" lengthAdjust="spacingAndGlyphs">From 2014</text><text x="896.0" y="520.0" font-family="Liberation Sans" font-size="12" fill="#3a3a3a" textLength="50" lengthAdjust="spacingAndGlyphs">&#8722;1.5MM</text><polygon points="797.3,733.5 986.0,733.5 986.0,800.0 797.3,800.0" fill="none" stroke="#b478e6" stroke-width="1.2" /><polygon points="798.0,734.0 985.0,734.0 985.0,752.0 798.0,752.0" fill="#ecdef8" stroke="none" stroke-width="0" /><path d="M797.3 752 H986" stroke="#b478e6" stroke-width="1.2"/><text x="842.7" y="748.5" font-family="Liberation Serif" font-size="15" fill="#a060e0" textLength="80" lengthAdjust="spacingAndGlyphs">School Creek</text><text x="963.0" y="748.0" font-family="Liberation Sans" font-size="8" fill="#111" >LMU</text><text x="804.7" y="769.5" font-family="Liberation Sans" font-size="13" fill="#b478e6" textLength="176" lengthAdjust="spacingAndGlyphs">Powder River Mining LLC.</text><text x="834.0" y="780.0" font-family="Liberation Sans" font-size="13" fill="#b478e6" textLength="110" lengthAdjust="spacingAndGlyphs">Subsidiary of:</text><path d="M1112.3 123 V779 M1138 123 V779" stroke="#666" stroke-width="1.2"/><rect x="1149" y="123" width="6" height="656" fill="#000"/></svg>
<div style="position:absolute;left:1323px;top:0px;width:1324px;height:63px;background:#2b579a;"></div>
<svg style="position:absolute;left:2130px;top:0px;" width="517" height="63" viewBox="0 0 517 63"><g fill="none" stroke="#22478a" stroke-width="2.2" opacity="0.85"><path d="M28 14 H227 L279 49"/><circle cx="299" cy="24" r="25"/><path d="M52 36 A15 15 0 1 1 52 37" /><path d="M47 34 L55 42"/><path d="M94 32 H193 L255 49"/><path d="M138 49 L201 43"/><path d="M390 49 L418 24 H517"/><path d="M472 26 L517 -2"/></g></svg>
<svg style="position:absolute;left:1343px;top:9px;" width="16" height="16" viewBox="0 0 16 16"><path d="M1.5 1.5 H12 L14.5 4 V14.5 H1.5 Z" fill="none" stroke="#fff" stroke-width="1.6"/><rect x="4" y="2" width="7" height="4" fill="#fff"/><rect x="4" y="9.5" width="8" height="5" fill="none" stroke="#fff" stroke-width="1.2"/></svg>
<svg style="position:absolute;left:1371px;top:9px;" width="32" height="16" viewBox="0 0 32 16"><path d="M3 6 H10 C14 6 16 8.5 16 11 C16 13.5 14 15 11 15" fill="none" stroke="#fff" stroke-width="2"/><path d="M6.5 2 L2.5 6 L6.5 10" fill="none" stroke="#fff" stroke-width="2"/><path d="M22 7 L28 7 L25 10 Z" fill="#fff"/></svg>
<svg style="position:absolute;left:1406px;top:9px;" width="16" height="16" viewBox="0 0 16 16"><path d="M8 2 A6 6 0 1 1 3 5" fill="none" stroke="#5577b0" stroke-width="1.6"/></svg>
<svg style="position:absolute;left:1437px;top:10px;" width="10" height="14" viewBox="0 0 10 14"><path d="M1 3 H9 M2 7 L5 10 L8 7 Z" stroke="#fff" fill="#fff" stroke-width="1"/></svg>
<div style="position:absolute;left:1597.5px;top:8.8px;font-family:'Liberation Sans', sans-serif;font-size:12.5px;line-height:1;white-space:nowrap;color:#b4c3dd;transform:scaleX(0.8929);transform-origin:0 0;">Business Plan v1 - Word</div>
<div style="position:absolute;left:1862px;top:0px;width:68px;height:34px;background:#1f4379;"></div>
<div style="position:absolute;left:1867.5px;top:9.7px;font-family:'Liberation Sans', sans-serif;font-size:11.5px;line-height:1;white-space:nowrap;color:#c5d3ea;transform:scaleX(0.8685);transform-origin:0 0;">Picture Tools</div>
<div style="position:absolute;left:2376px;top:8.8px;font-family:'Liberation Sans', sans-serif;font-size:12.5px;line-height:1;white-space:nowrap;color:#b4c3dd;transform:scaleX(0.9189);transform-origin:0 0;">Kevin Hathaway</div>
<svg style="position:absolute;left:2480px;top:6px;" width="167" height="20" viewBox="0 0 167 20"><rect x="4" y="4" width="11" height="9" fill="none" stroke="#5a7cb4" stroke-width="1"/><path d="M52 9 H63" stroke="#5a7cb4"/><rect x="95.5" y="4.5" width="10" height="10" fill="none" stroke="#5a7cb4"/><path d="M139 4 L150 15 M150 4 L139 15" stroke="#5a7cb4"/></svg>
<div style="position:absolute;left:1344px;top:41.7px;font-family:'Liberation Sans', sans-serif;font-size:12.2px;line-height:1;white-space:nowrap;color:#ffffff;transform:scaleX(0.8851);transform-origin:0 0;">File</div>
<div style="position:absolute;left:1393.6px;top:41.7px;font-family:'Liberation Sans', sans-serif;font-size:12.2px;line-height:1;white-space:nowrap;color:#ffffff;transform:scaleX(0.9741);transform-origin:0 0;">Home</div>
<div style="position:absolute;left:1448.7px;top:41.7px;font-family:'Liberation Sans', sans-serif;font-size:12.2px;line-height:1;white-space:nowrap;color:#ffffff;transform:scaleX(0.9177);transform-origin:0 0;">Insert</div>
<div style="position:absolute;left:1500px;top:41.7px;font-family:'Liberation Sans', sans-serif;font-size:12.2px;line-height:1;white-space:nowrap;color:#ffffff;transform:scaleX(0.9479);transform-origin:0 0;">Design</div>
<div style="position:absolute;left:1559px;top:41.7px;font-family:'Liberation Sans', sans-serif;font-size:12.2px;line-height:1;white-space:nowrap;color:#ffffff;transform:scaleX(0.9364);transform-origin:0 0;">Layout</div>
<div style="position:absolute;left:1616.5px;top:41.7px;font-family:'Liberation Sans', sans-serif;font-size:12.2px;line-height:1;white-space:nowrap;color:#ffffff;transform:scaleX(0.9040);transform-origin:0 0;">References</div>
<div style="position:absolute;left:1695.8px;top:41.7px;font-family:'Liberation Sans', sans-serif;font-size:12.2px;line-height:1;white-space:nowrap;color:#ffffff;transform:scaleX(0.9877);transform-origin:0 0;">Mailings</div>
<div style="position:absolute;left:1763.4px;top:41.7px;font-family:'Liberation Sans', sans-serif;font-size:12.2px;line-height:1;white-space:nowrap;color:#ffffff;transform:scaleX(0.9099);transform-origin:0 0;">Review</div>
<div style="position:absolute;left:1820.6px;top:41.7px;font-family:'Liberation Sans', sans-serif;font-size:12.2px;line-height:1;white-space:nowrap;color:#ffffff;transform:scaleX(1.0410);transform-origin:0 0;">View</div>
<div style="position:absolute;left:1862px;top:34px;width:68px;height:29px;background:#f3f3f3;"></div>
<div style="position:absolute;left:1876.6px;top:41.7px;font-family:'Liberation Sans', sans-serif;font-size:12.2px;line-height:1;white-space:nowrap;color:#2b579a;transform:scaleX(0.9757);transform-origin:0 0;">Format</div>
<svg style="position:absolute;left:1941px;top:39px;" width="14" height="18" viewBox="0 0 14 18"><path d="M7 2 C3.5 2 2 4.5 2 7 C2 9.5 4 10.5 4.5 13 H9.5 C10 10.5 12 9.5 12 7 C12 4.5 10.5 2 7 2 Z" fill="none" stroke="#fff" stroke-width="1.2"/><path d="M5 15 H9 M5.5 17 H8.5" stroke="#fff" stroke-width="1"/></svg>
<div style="position:absolute;left:1958.5px;top:42.0px;font-family:'Liberation Sans', sans-serif;font-size:12.2px;line-height:1;white-space:nowrap;color:#c4d0e8;transform:scaleX(0.9831);transform-origin:0 0;">Tell me what you want to do</div>
<div style="position:absolute;left:2575px;top:34px;width:59px;height:28px;background:#1f4379;"></div>
<svg style="position:absolute;left:2580px;top:38px;" width="18" height="20" viewBox="0 0 18 20"><circle cx="8" cy="6" r="4.5" fill="none" stroke="#fff" stroke-width="1.5"/><path d="M1 18 C1 12 4 10.5 8 10.5 C10 10.5 11.5 11 12.5 12" fill="none" stroke="#fff" stroke-width="1.5"/><path d="M14 11 V18 M10.5 14.5 H17.5" stroke="#fff" stroke-width="1.5"/></svg>
<div style="position:absolute;left:2599px;top:43.7px;font-family:'Liberation Sans', sans-serif;font-size:12.2px;line-height:1;white-space:nowrap;color:#ffffff;transform:scaleX(0.8754);transform-origin:0 0;">Share</div>
<div style="position:absolute;left:1323px;top:63px;width:1324px;height:88px;background:#f3f3f3;"></div>
<div style="position:absolute;left:1323px;top:150px;width:1324px;height:1px;background:#d5d5d5;"></div>
<svg style="position:absolute;left:1345px;top:68px;" width="30" height="31" viewBox="0 0 30 31"><rect x="0.5" y="0.5" width="28" height="29" fill="#fff" stroke="#999"/><path d="M1 1 H14 V22 H1 Z" fill="#3a7fd0"/><path d="M1 22 C3 12 6 8 10 10 C12 6 14 8 14 8 V22 Z" fill="#fff"/><path d="M1 22 L6 18 L10 20 L14 16 V22 Z" fill="#6ab070"/><path d="M15 14 L19 11 L23 13 L28 9 V22 H15 Z" fill="#6ab070"/><rect x="1" y="22" width="27" height="7" fill="#3a7fd0"/><path d="M14.5 1 V29" stroke="#bbb" stroke-dasharray="2 1.5"/><path d="M1 22 H28" stroke="#fff" stroke-dasharray="2 1"/></svg>
<div style="position:absolute;left:1338.7px;top:103.7px;font-family:'Liberation Sans', sans-serif;font-size:12.2px;line-height:1;white-space:nowrap;color:#4a4a4a;transform:scaleX(0.9157);transform-origin:0 0;">Remove</div>
<div style="position:absolute;left:1329px;top:119.4px;font-family:'Liberation Sans', sans-serif;font-size:12.2px;line-height:1;white-space:nowrap;color:#4a4a4a;transform:scaleX(0.9368);transform-origin:0 0;">Background</div>
<div style="position:absolute;left:1396.5px;top:68px;width:1px;height:77px;background:#dadada;"></div>
<svg style="position:absolute;left:1402px;top:70px;" width="18" height="18" viewBox="0 0 18 18"><circle cx="9" cy="9" r="4" fill="#f8c040"/><g stroke="#f8c040" stroke-width="1.6"><path d="M9 0 V3 M9 15 V18 M0 9 H3 M15 9 H18 M2.6 2.6 L4.7 4.7 M13.3 13.3 L15.4 15.4 M2.6 15.4 L4.7 13.3 M13.3 4.7 L15.4 2.6"/></g></svg>
<div style="position:absolute;left:1420px;top:71.3px;font-family:'Liberation Sans', sans-serif;font-size:12.2px;line-height:1;white-space:nowrap;color:#4a4a4a;transform:scaleX(0.9458);transform-origin:0 0;">Corrections</div>
<svg style="position:absolute;left:1485px;top:73px;" width="6" height="4" viewBox="0 0 6 4"><path d="M0 0 H5 L2.5 3 Z" fill="#555"/></svg>
<svg style="position:absolute;left:1403px;top:91px;" width="16" height="16" viewBox="0 0 16 16"><rect x="0.5" y="0.5" width="15" height="15" fill="#7ab0e8" stroke="#3a7fd0"/><path d="M2 13 L6 8 L9 11 L12 7 L14 13 Z" fill="#2a5aa0"/></svg>
<div style="position:absolute;left:1420px;top:93.4px;font-family:'Liberation Sans', sans-serif;font-size:12.2px;line-height:1;white-space:nowrap;color:#4a4a4a;transform:scaleX(0.9844);transform-origin:0 0;">Color</div>
<svg style="position:absolute;left:1451px;top:95px;" width="6" height="4" viewBox="0 0 6 4"><path d="M0 0 H5 L2.5 3 Z" fill="#555"/></svg>
<svg style="position:absolute;left:1402px;top:112px;" width="16" height="17" viewBox="0 0 16 17"><rect x="0.5" y="0.5" width="15" height="16" fill="#fff" stroke="#777"/><rect x="2" y="2" width="5" height="13" fill="#3a7fd0"/><rect x="9" y="2" width="5" height="13" fill="#6ab070"/></svg>
<div style="position:absolute;left:1421px;top:115.5px;font-family:'Liberation Sans', sans-serif;font-size:12.2px;line-height:1;white-space:nowrap;color:#4a4a4a;transform:scaleX(0.9512);transform-origin:0 0;">Artistic Effects</div>
<svg style="position:absolute;left:1500px;top:117px;" width="6" height="4" viewBox="0 0 6 4"><path d="M0 0 H5 L2.5 3 Z" fill="#555"/></svg>
<svg style="position:absolute;left:1510px;top:69px;" width="18" height="17" viewBox="0 0 18 17"><rect x="2" y="2" width="14" height="13" fill="#fff" stroke="#777"/><path d="M4 13 L8 8 L11 11 L14 7 V13 Z" fill="#3a7fd0"/><path d="M0 0 H4 M0 0 V4 M18 0 H14 M18 0 V4 M0 17 H4 M0 17 V13 M18 17 H14 M18 17 V13" stroke="#3a7fd0" stroke-width="1.5"/></svg>
<div style="position:absolute;left:1528px;top:71.3px;font-family:'Liberation Sans', sans-serif;font-size:12.2px;line-height:1;white-space:nowrap;color:#4a4a4a;transform:scaleX(0.9170);transform-origin:0 0;">Compress Pictures</div>
<svg style="position:absolute;left:1510px;top:90px;" width="18" height="17" viewBox="0 0 18 17"><rect x="1" y="1" width="10" height="9" fill="#fff" stroke="#777"/><rect x="7" y="7" width="10" height="9" fill="#fff" stroke="#777"/><path d="M8 15 L11 11 L13 13 L16 10 V15 Z" fill="#3a7fd0"/></svg>
<div style="position:absolute;left:1528px;top:93.4px;font-family:'Liberation Sans', sans-serif;font-size:12.2px;line-height:1;white-space:nowrap;color:#4a4a4a;transform:scaleX(0.9275);transform-origin:0 0;">Change Picture</div>
<svg style="position:absolute;left:1510px;top:112px;" width="18" height="17" viewBox="0 0 18 17"><rect x="5" y="4" width="12" height="12" fill="#fff" stroke="#777"/><path d="M6 14 L9 10 L12 12 L16 8 V14 Z" fill="#3a7fd0"/><path d="M2 8 C2 3 6 1 10 2" fill="none" stroke="#3a7fd0" stroke-width="1.8"/><path d="M0 5 L2 9 L5 6" fill="#3a7fd0"/></svg>
<div style="position:absolute;left:1528px;top:115.5px;font-family:'Liberation Sans', sans-serif;font-size:12.2px;line-height:1;white-space:nowrap;color:#4a4a4a;transform:scaleX(0.9149);transform-origin:0 0;">Reset Picture</div>
<svg style="position:absolute;left:1602px;top:117px;" width="6" height="4" viewBox="0 0 6 4"><path d="M0 0 H5 L2.5 3 Z" fill="#555"/></svg>
<div style="position:absolute;left:1463px;top:136.9px;font-family:'Liberation Sans', sans-serif;font-size:11.5px;line-height:1;white-space:nowrap;color:#555;transform:scaleX(0.8760);transform-origin:0 0;">Adjust</div>
<div style="position:absolute;left:1632px;top:68px;width:1px;height:77px;background:#dadada;"></div>
<div style="position:absolute;left:1636px;top:68px;width:401px;height:59px;background:#ffffff;border:1px solid #d5d5d5"></div>
<div style="position:absolute;left:2024px;top:69px;width:13px;height:57px;background:#f3f3f3;border-left:1px solid #d5d5d5"></div>
<svg style="position:absolute;left:2024px;top:70px;" width="13" height="56" viewBox="0 0 13 56"><path d="M4 13 L6.5 10 L9 13 Z" fill="#bbb"/><path d="M4 31 H9 L6.5 34 Z" fill="#555"/><path d="M4 47 H9 M4 50 H9 L6.5 53 Z" stroke="#555" fill="#555"/></svg>
<svg style="position:absolute;left:1647.7px;top:80px;" width="34" height="30" viewBox="0 0 34 30"><rect x="0.5" y="0.5" width="32" height="26" fill="#fff" stroke="#bbb"/><rect x="3" y="3" width="27" height="21" fill="#3a7fd0"/><path d="M3 9 C5 6 8 6 10 8 C12 5 16 5 18 8 C21 6 25 6 27 8 C28.5 7.5 30 8 30 9 V21 H3 Z" fill="#fff"/><path d="M3 21 L3 18 L8 15 L13 16 L18 13 L23 14 L30 11 V21 Z" fill="#6cae84"/><rect x="3" y="21" width="27" height="3" fill="#3a7fd0"/></svg>
<svg style="position:absolute;left:1702px;top:80px;" width="34" height="30" viewBox="0 0 34 30"><rect x="0.5" y="0.5" width="32" height="26" fill="#fff" stroke="#ccc"/><rect x="3" y="3" width="27" height="21" fill="#3a7fd0"/><path d="M3 9 C5 6 8 6 10 8 C12 5 16 5 18 8 C21 6 25 6 27 8 C28.5 7.5 30 8 30 9 V21 H3 Z" fill="#fff"/><path d="M3 21 L3 18 L8 15 L13 16 L18 13 L23 14 L30 11 V21 Z" fill="#6cae84"/><rect x="3" y="21" width="27" height="3" fill="#3a7fd0"/></svg>
<svg style="position:absolute;left:1757px;top:80px;" width="34" height="30" viewBox="0 0 34 30"><rect x="0" y="0" width="33" height="27" fill="#bbb"/><rect x="3" y="3" width="27" height="21" fill="#3a7fd0"/><path d="M3 9 C5 6 8 6 10 8 C12 5 16 5 18 8 C21 6 25 6 27 8 C28.5 7.5 30 8 30 9 V21 H3 Z" fill="#fff"/><path d="M3 21 L3 18 L8 15 L13 16 L18 13 L23 14 L30 11 V21 Z" fill="#6cae84"/><rect x="3" y="21" width="27" height="3" fill="#3a7fd0"/></svg>
<svg style="position:absolute;left:1813px;top:80px;" width="34" height="30" viewBox="0 0 34 30"><rect x="3" y="3" width="27" height="21" fill="#3a7fd0"/><path d="M3 9 C5 6 8 6 10 8 C12 5 16 5 18 8 C21 6 25 6 27 8 C28.5 7.5 30 8 30 9 V21 H3 Z" fill="#fff"/><path d="M3 21 L3 18 L8 15 L13 16 L18 13 L23 14 L30 11 V21 Z" fill="#6cae84"/><rect x="3" y="21" width="27" height="3" fill="#3a7fd0"/></svg>
<svg style="position:absolute;left:1868px;top:80px;" width="34" height="30" viewBox="0 0 34 30"><rect x="3" y="3" width="27" height="21" fill="#3a7fd0"/><path d="M3 9 C5 6 8 6 10 8 C12 5 16 5 18 8 C21 6 25 6 27 8 C28.5 7.5 30 8 30 9 V21 H3 Z" fill="#fff"/><path d="M3 21 L3 18 L8 15 L13 16 L18 13 L23 14 L30 11 V21 Z" fill="#6cae84"/><rect x="3" y="21" width="27" height="3" fill="#3a7fd0"/></svg>
<svg style="position:absolute;left:1922px;top:80px;" width="34" height="30" viewBox="0 0 34 30"><rect x="3" y="3" width="27" height="21" fill="#3a7fd0"/><path d="M3 9 C5 6 8 6 10 8 C12 5 16 5 18 8 C21 6 25 6 27 8 C28.5 7.5 30 8 30 9 V21 H3 Z" fill="#fff"/><path d="M3 21 L3 18 L8 15 L13 16 L18 13 L23 14 L30 11 V21 Z" fill="#6cae84"/><rect x="3" y="21" width="27" height="3" fill="#3a7fd0"/></svg>
<svg style="position:absolute;left:1977px;top:80px;" width="35" height="30" viewBox="0 0 35 30"><rect x="0" y="0" width="34" height="29" fill="#111"/><rect x="3" y="3" width="28" height="23" fill="#fff"/><rect x="5" y="5" width="24" height="19" fill="#3a7fd0"/><path d="M5 11 C10 8 14 10 18 8 C22 6 25 9 29 7 V24 H5 Z" fill="#fff"/><path d="M5 24 L11 19 L17 21 L23 17 L29 18 V24 Z" fill="#6ab070"/></svg>
<div style="position:absolute;left:1853px;top:136.9px;font-family:'Liberation Sans', sans-serif;font-size:11.5px;line-height:1;white-space:nowrap;color:#555;transform:scaleX(0.8605);transform-origin:0 0;">Picture Styles</div>
<svg style="position:absolute;left:2123px;top:137px;" width="8" height="8" viewBox="0 0 8 8"><path d="M0.5 0.5 H7.5 V7.5 H0.5 Z M3 3 L7 7" fill="none" stroke="#777"/></svg>
<svg style="position:absolute;left:2042px;top:69px;" width="18" height="17" viewBox="0 0 18 17"><path d="M3 12 L13 2 L16 5 L6 15 Z" fill="none" stroke="#555" stroke-width="1.4"/><rect x="1" y="14" width="16" height="3" fill="#3a7fd0"/></svg>
<div style="position:absolute;left:2060.8px;top:71.0px;font-family:'Liberation Sans', sans-serif;font-size:12.2px;line-height:1;white-space:nowrap;color:#4a4a4a;transform:scaleX(0.9490);transform-origin:0 0;">Picture Border</div>
<svg style="position:absolute;left:2137px;top:73px;" width="6" height="4" viewBox="0 0 6 4"><path d="M0 0 H5 L2.5 3 Z" fill="#555"/></svg>
<svg style="position:absolute;left:2043px;top:91px;" width="16" height="16" viewBox="0 0 16 16"><circle cx="8" cy="8" r="6.5" fill="#ddd" stroke="#555" stroke-width="1.2"/><path d="M3 11 C6 13 11 13 14 9" stroke="#777" fill="none" stroke-width="2"/></svg>
<div style="position:absolute;left:2060.8px;top:92.2px;font-family:'Liberation Sans', sans-serif;font-size:12.2px;line-height:1;white-space:nowrap;color:#4a4a4a;transform:scaleX(0.9371);transform-origin:0 0;">Picture Effects</div>
<svg style="position:absolute;left:2136px;top:94px;" width="6" height="4" viewBox="0 0 6 4"><path d="M0 0 H5 L2.5 3 Z" fill="#555"/></svg>
<svg style="position:absolute;left:2043px;top:111px;" width="17" height="17" viewBox="0 0 17 17"><rect x="1" y="1" width="9" height="8" fill="#fff" stroke="#777"/><path d="M2 8 L5 5 L9 8 Z" fill="#3a7fd0"/><rect x="9" y="10" width="7" height="6" fill="#fff" stroke="#6ab070"/><path d="M10 3 H15 V9" fill="none" stroke="#3a7fd0"/></svg>
<div style="position:absolute;left:2060.8px;top:113.7px;font-family:'Liberation Sans', sans-serif;font-size:12.2px;line-height:1;white-space:nowrap;color:#4a4a4a;transform:scaleX(0.9360);transform-origin:0 0;">Picture Layout</div>
<svg style="position:absolute;left:2135px;top:116px;" width="6" height="4" viewBox="0 0 6 4"><path d="M0 0 H5 L2.5 3 Z" fill="#555"/></svg>
<div style="position:absolute;left:2151px;top:68px;width:1px;height:77px;background:#dadada;"></div>
<svg style="position:absolute;left:2157px;top:68px;" width="16" height="18" viewBox="0 0 16 18"><rect x="1" y="1" width="14" height="16" fill="#fff" stroke="#666"/><rect x="4" y="4" width="8" height="6" fill="#3a7fd0"/><path d="M3 12 H13 M3 14.5 H13" stroke="#888"/></svg>
<div style="position:absolute;left:2175.5px;top:71.0px;font-family:'Liberation Sans', sans-serif;font-size:12.2px;line-height:1;white-space:nowrap;color:#4a4a4a;transform:scaleX(0.9354);transform-origin:0 0;">Position</div>
<svg style="position:absolute;left:2221px;top:73px;" width="6" height="4" viewBox="0 0 6 4"><path d="M0 0 H5 L2.5 3 Z" fill="#555"/></svg>
<svg style="position:absolute;left:2157px;top:91px;" width="16" height="15" viewBox="0 0 16 15"><path d="M0 1 H16 M0 13 H16" stroke="#3a7fd0" stroke-width="1.5"/><path d="M3 11 C3 5 13 5 13 11" fill="none" stroke="#333" stroke-width="1.8"/></svg>
<div style="position:absolute;left:2175.5px;top:92.2px;font-family:'Liberation Sans', sans-serif;font-size:12.2px;line-height:1;white-space:nowrap;color:#4a4a4a;transform:scaleX(0.9638);transform-origin:0 0;">Wrap Text</div>
<svg style="position:absolute;left:2233px;top:94px;" width="6" height="4" viewBox="0 0 6 4"><path d="M0 0 H5 L2.5 3 Z" fill="#555"/></svg>
<svg style="position:absolute;left:2157px;top:111px;" width="16" height="17" viewBox="0 0 16 17"><rect x="1" y="1" width="9" height="9" fill="#ddd" stroke="#bbb"/><rect x="6" y="6" width="9" height="9" fill="#eee" stroke="#bbb"/></svg>
<div style="position:absolute;left:2175.5px;top:113.7px;font-family:'Liberation Sans', sans-serif;font-size:12.2px;line-height:1;white-space:nowrap;color:#aaaaaa;transform:scaleX(0.9397);transform-origin:0 0;">Bring Forward</div>
<svg style="position:absolute;left:2258px;top:116px;" width="6" height="4" viewBox="0 0 6 4"><path d="M0 0 H5 L2.5 3 Z" fill="#bbb"/></svg>
<svg style="position:absolute;left:2268px;top:69px;" width="17" height="17" viewBox="0 0 17 17"><rect x="1" y="1" width="9" height="9" fill="#eee" stroke="#bbb"/><rect x="6" y="6" width="9" height="9" fill="#f6f6f6" stroke="#bbb"/></svg>
<div style="position:absolute;left:2285.5px;top:71.0px;font-family:'Liberation Sans', sans-serif;font-size:12.2px;line-height:1;white-space:nowrap;color:#aaaaaa;transform:scaleX(0.9245);transform-origin:0 0;">Send Backward</div>
<svg style="position:absolute;left:2374px;top:73px;" width="6" height="4" viewBox="0 0 6 4"><path d="M0 0 H5 L2.5 3 Z" fill="#bbb"/></svg>
<svg style="position:absolute;left:2268px;top:90px;" width="17" height="18" viewBox="0 0 17 18"><rect x="1" y="1" width="6" height="6" fill="#fff" stroke="#555"/><rect x="1" y="10" width="6" height="6" fill="#fff" stroke="#555"/><path d="M10 4 H15 M10 13 H13" stroke="#555"/><path d="M9 7 L16 13 L12 13 L14 17" fill="#f8c040" stroke="#555" stroke-width="0.8"/></svg>
<div style="position:absolute;left:2285.5px;top:92.2px;font-family:'Liberation Sans', sans-serif;font-size:12.2px;line-height:1;white-space:nowrap;color:#4a4a4a;transform:scaleX(0.9138);transform-origin:0 0;">Selection Pane</div>
<svg style="position:absolute;left:2268px;top:111px;" width="17" height="17" viewBox="0 0 17 17"><path d="M1.5 0 V17" stroke="#555"/><rect x="3" y="3" width="12" height="4" fill="#f8c040"/><rect x="3" y="9" width="8" height="4" fill="#f8c040"/><path d="M3 15 L8 15" stroke="#3a7fd0" stroke-width="1.5"/></svg>
<div style="position:absolute;left:2285.5px;top:113.7px;font-family:'Liberation Sans', sans-serif;font-size:12.2px;line-height:1;white-space:nowrap;color:#4a4a4a;transform:scaleX(1.0210);transform-origin:0 0;">Align</div>
<svg style="position:absolute;left:2319px;top:116px;" width="6" height="4" viewBox="0 0 6 4"><path d="M0 0 H5 L2.5 3 Z" fill="#555"/></svg>
<svg style="position:absolute;left:2384px;top:69px;" width="17" height="17" viewBox="0 0 17 17"><rect x="1" y="1" width="15" height="15" fill="none" stroke="#bbb" stroke-dasharray="2 1"/><rect x="4" y="4" width="5" height="5" fill="none" stroke="#bbb"/><rect x="8" y="8" width="5" height="5" fill="none" stroke="#bbb"/></svg>
<div style="position:absolute;left:2402px;top:71.0px;font-family:'Liberation Sans', sans-serif;font-size:12.2px;line-height:1;white-space:nowrap;color:#aaaaaa;transform:scaleX(0.9555);transform-origin:0 0;">Group</div>
<svg style="position:absolute;left:2439px;top:73px;" width="6" height="4" viewBox="0 0 6 4"><path d="M0 0 H5 L2.5 3 Z" fill="#bbb"/></svg>
<svg style="position:absolute;left:2384px;top:91px;" width="17" height="15" viewBox="0 0 17 15"><path d="M9 14 L13 2 L16 14 Z" fill="#444"/><path d="M1 14 L6 5 L8 14 Z" fill="#ddd" stroke="#999"/><path d="M3 6 C4 3 7 2 9 3" fill="none" stroke="#3a7fd0" stroke-width="1.2"/></svg>
<div style="position:absolute;left:2402px;top:92.2px;font-family:'Liberation Sans', sans-serif;font-size:12.2px;line-height:1;white-space:nowrap;color:#4a4a4a;transform:scaleX(0.9737);transform-origin:0 0;">Rotate</div>
<svg style="position:absolute;left:2443px;top:94px;" width="6" height="4" viewBox="0 0 6 4"><path d="M0 0 H5 L2.5 3 Z" fill="#555"/></svg>
<div style="position:absolute;left:2283.7px;top:136.9px;font-family:'Liberation Sans', sans-serif;font-size:11.5px;line-height:1;white-space:nowrap;color:#555;transform:scaleX(0.8994);transform-origin:0 0;">Arrange</div>
<div style="position:absolute;left:2454px;top:68px;width:1px;height:77px;background:#dadada;"></div>
<svg style="position:absolute;left:2462px;top:69px;" width="30" height="30" viewBox="0 0 30 30"><rect x="1" y="1" width="26" height="26" fill="none" stroke="#777" stroke-dasharray="2 1"/><path d="M3 14 L8 9 L12 12 L16 8 V14 Z" fill="#3a7fd0"/><circle cx="14" cy="5" r="1.5" fill="#f8a030"/><path d="M19 20 H29 M24 15 V29 M21 22 V27 H27" fill="none" stroke="#444" stroke-width="2"/></svg>
<div style="position:absolute;left:2464px;top:104.7px;font-family:'Liberation Sans', sans-serif;font-size:12.2px;line-height:1;white-space:nowrap;color:#4a4a4a;transform:scaleX(0.9454);transform-origin:0 0;">Crop</div>
<svg style="position:absolute;left:2474px;top:121px;" width="6" height="4" viewBox="0 0 6 4"><path d="M0 0 H5 L2.5 3 Z" fill="#555"/></svg>
<svg style="position:absolute;left:2497px;top:74px;" width="20" height="22" viewBox="0 0 20 22"><path d="M4 1 V20 M1 4 L4 1 L7 4 M1 17 L4 20 L7 17" fill="none" stroke="#3a7fd0" stroke-width="1.3"/><rect x="11" y="2" width="5" height="17" fill="none" stroke="#444"/></svg>
<div style="position:absolute;left:2517px;top:74px;width:72px;height:22px;background:#ffffff;border:1px solid #c6c6c6"></div>
<div style="position:absolute;left:2520px;top:80.7px;font-family:'Liberation Sans', sans-serif;font-size:12.2px;line-height:1;white-space:nowrap;color:#333;transform:scaleX(0.9261);transform-origin:0 0;">4.19"</div>
<svg style="position:absolute;left:2578px;top:76px;" width="8" height="18" viewBox="0 0 8 18"><path d="M1 5 L4 2 L7 5 Z M1 13 L4 16 L7 13 Z" fill="#444"/></svg>
<svg style="position:absolute;left:2497px;top:103px;" width="20" height="22" viewBox="0 0 20 22"><rect x="2" y="2" width="16" height="6" fill="none" stroke="#444"/><path d="M1 15 H19 M4 12 L1 15 L4 18 M16 12 L19 15 L16 18" fill="none" stroke="#3a7fd0" stroke-width="1.3"/></svg>
<div style="position:absolute;left:2517px;top:103px;width:72px;height:22px;background:#ffffff;border:1px solid #c6c6c6"></div>
<div style="position:absolute;left:2520px;top:109.7px;font-family:'Liberation Sans', sans-serif;font-size:12.2px;line-height:1;white-space:nowrap;color:#333;transform:scaleX(0.9261);transform-origin:0 0;">6.54"</div>
<svg style="position:absolute;left:2578px;top:105px;" width="8" height="18" viewBox="0 0 8 18"><path d="M1 5 L4 2 L7 5 Z M1 13 L4 16 L7 13 Z" fill="#444"/></svg>
<div style="position:absolute;left:2506.4px;top:136.9px;font-family:'Liberation Sans', sans-serif;font-size:11.5px;line-height:1;white-space:nowrap;color:#555;transform:scaleX(0.7599);transform-origin:0 0;">Size</div>
<svg style="position:absolute;left:2580px;top:137px;" width="8" height="8" viewBox="0 0 8 8"><path d="M0.5 0.5 H7.5 V7.5 H0.5 Z M3 3 L7 7" fill="none" stroke="#777"/></svg>
<div style="position:absolute;left:2592px;top:68px;width:1px;height:77px;background:#dadada;"></div>
<svg style="position:absolute;left:2626px;top:136px;" width="14" height="10" viewBox="0 0 14 10"><path d="M2 8 L7 3 L12 8" fill="none" stroke="#444" stroke-width="1.5"/></svg>
<div style="position:absolute;left:1323px;top:151px;width:1324px;height:616px;background:#e1e1e1;"></div>
<div style="position:absolute;left:1325px;top:153px;width:20px;height:18px;background:#ffffff;border:1px solid #cfcfcf"></div>
<div style="position:absolute;left:1331px;top:157.7px;font-family:'Liberation Sans', sans-serif;font-size:11px;line-height:1;white-space:nowrap;color:#333;font-weight:bold">L</div>
<div style="position:absolute;left:1584px;top:154px;width:806px;height:14px;background:#c8c8c8;"></div>
<div style="position:absolute;left:1680.6px;top:154px;width:614px;height:14px;background:#ffffff;"></div>
<svg style="position:absolute;left:1584px;top:154px;overflow:visible" width="806" height="20" viewBox="0 0 806 20"><text x="2.2" y="11" font-family="Liberation Sans" font-size="10" fill="#444" text-anchor="middle">1</text><rect x="13.5" y="6.5" width="1" height="1" fill="#555"/><rect x="25.3" y="6.5" width="1" height="1" fill="#555"/><rect x="37.1" y="6.5" width="1" height="1" fill="#555"/><path d="M49.4 4.5 V9.5" stroke="#555" stroke-width="1"/><rect x="60.7" y="6.5" width="1" height="1" fill="#555"/><rect x="72.5" y="6.5" width="1" height="1" fill="#555"/><rect x="84.3" y="6.5" width="1" height="1" fill="#555"/><rect x="107.9" y="6.5" width="1" height="1" fill="#555"/><rect x="119.7" y="6.5" width="1" height="1" fill="#555"/><rect x="131.5" y="6.5" width="1" height="1" fill="#555"/><path d="M143.8 4.5 V9.5" stroke="#555" stroke-width="1"/><rect x="155.1" y="6.5" width="1" height="1" fill="#555"/><rect x="166.9" y="6.5" width="1" height="1" fill="#555"/><rect x="178.7" y="6.5" width="1" height="1" fill="#555"/><text x="191.0" y="11" font-family="Liberation Sans" font-size="10" fill="#444" text-anchor="middle">1</text><rect x="202.3" y="6.5" width="1" height="1" fill="#555"/><rect x="214.1" y="6.5" width="1" height="1" fill="#555"/><rect x="225.9" y="6.5" width="1" height="1" fill="#555"/><path d="M238.2 4.5 V9.5" stroke="#555" stroke-width="1"/><rect x="249.5" y="6.5" width="1" height="1" fill="#555"/><rect x="261.3" y="6.5" width="1" height="1" fill="#555"/><rect x="273.1" y="6.5" width="1" height="1" fill="#555"/><text x="285.4" y="11" font-family="Liberation Sans" font-size="10" fill="#444" text-anchor="middle">2</text><rect x="296.7" y="6.5" width="1" height="1" fill="#555"/><rect x="308.5" y="6.5" width="1" height="1" fill="#555"/><rect x="320.3" y="6.5" width="1" height="1" fill="#555"/><path d="M332.6 4.5 V9.5" stroke="#555" stroke-width="1"/><rect x="343.9" y="6.5" width="1" height="1" fill="#555"/><rect x="355.7" y="6.5" width="1" height="1" fill="#555"/><rect x="367.5" y="6.5" width="1" height="1" fill="#555"/><text x="379.8" y="11" font-family="Liberation Sans" font-size="10" fill="#444" text-anchor="middle">3</text><rect x="391.1" y="6.5" width="1" height="1" fill="#555"/><rect x="402.9" y="6.5" width="1" height="1" fill="#555"/><rect x="414.7" y="6.5" width="1" height="1" fill="#555"/><path d="M427.0 4.5 V9.5" stroke="#555" stroke-width="1"/><rect x="438.3" y="6.5" width="1" height="1" fill="#555"/><rect x="450.1" y="6.5" width="1" height="1" fill="#555"/><rect x="461.9" y="6.5" width="1" height="1" fill="#555"/><text x="474.2" y="11" font-family="Liberation Sans" font-size="10" fill="#444" text-anchor="middle">4</text><rect x="485.5" y="6.5" width="1" height="1" fill="#555"/><rect x="497.3" y="6.5" width="1" height="1" fill="#555"/><rect x="509.1" y="6.5" width="1" height="1" fill="#555"/><path d="M521.4 4.5 V9.5" stroke="#555" stroke-width="1"/><rect x="532.7" y="6.5" width="1" height="1" fill="#555"/><rect x="544.5" y="6.5" width="1" height="1" fill="#555"/><rect x="556.3" y="6.5" width="1" height="1" fill="#555"/><text x="568.6" y="11" font-family="Liberation Sans" font-size="10" fill="#444" text-anchor="middle">5</text><rect x="579.9" y="6.5" width="1" height="1" fill="#555"/><rect x="591.7" y="6.5" width="1" height="1" fill="#555"/><rect x="603.5" y="6.5" width="1" height="1" fill="#555"/><path d="M615.8 4.5 V9.5" stroke="#555" stroke-width="1"/><rect x="627.1" y="6.5" width="1" height="1" fill="#555"/><rect x="638.9" y="6.5" width="1" height="1" fill="#555"/><rect x="650.7" y="6.5" width="1" height="1" fill="#555"/><text x="663.0" y="11" font-family="Liberation Sans" font-size="10" fill="#444" text-anchor="middle">6</text><rect x="674.3" y="6.5" width="1" height="1" fill="#555"/><rect x="686.1" y="6.5" width="1" height="1" fill="#555"/><rect x="697.9" y="6.5" width="1" height="1" fill="#555"/><path d="M710.2 4.5 V9.5" stroke="#555" stroke-width="1"/><rect x="721.5" y="6.5" width="1" height="1" fill="#555"/><rect x="733.3" y="6.5" width="1" height="1" fill="#555"/><rect x="745.1" y="6.5" width="1" height="1" fill="#555"/><text x="757.4" y="11" font-family="Liberation Sans" font-size="10" fill="#444" text-anchor="middle">7</text><rect x="768.7" y="6.5" width="1" height="1" fill="#555"/><rect x="780.5" y="6.5" width="1" height="1" fill="#555"/><rect x="792.3" y="6.5" width="1" height="1" fill="#555"/><path d="M92 0.5 L101 0.5 L96.5 6.5 Z M92 12.5 L101 12.5 L96.5 6.5 Z" fill="#fff" stroke="#888"/><rect x="92" y="12.5" width="9" height="5" fill="#fff" stroke="#888"/><path d="M706 13 L715 13 L710.5 7 Z" fill="#fff" stroke="#888"/></svg>
<div style="position:absolute;left:1328px;top:175px;width:13px;height:592px;background:#c8c8c8;"></div>
<div style="position:absolute;left:1328px;top:243px;width:13px;height:524px;background:#ffffff;"></div>
<svg style="position:absolute;left:1327px;top:175px;" width="14" height="592" viewBox="0 0 14 592"><rect x="6.5" y="79.3" width="1" height="1" fill="#555"/><rect x="6.5" y="91.1" width="1" height="1" fill="#555"/><rect x="6.5" y="103.0" width="1" height="1" fill="#555"/><path d="M4.5 115.3 H9.5" stroke="#555"/><rect x="6.5" y="126.6" width="1" height="1" fill="#555"/><rect x="6.5" y="138.4" width="1" height="1" fill="#555"/><rect x="6.5" y="150.3" width="1" height="1" fill="#555"/><text x="7" y="162.6" font-family="Liberation Sans" font-size="10" fill="#444" text-anchor="middle" transform="rotate(-90 7 162.6)" dy="3.5">1</text><rect x="6.5" y="173.9" width="1" height="1" fill="#555"/><rect x="6.5" y="185.8" width="1" height="1" fill="#555"/><rect x="6.5" y="197.6" width="1" height="1" fill="#555"/><path d="M4.5 209.9 H9.5" stroke="#555"/><rect x="6.5" y="221.2" width="1" height="1" fill="#555"/><rect x="6.5" y="233.0" width="1" height="1" fill="#555"/><rect x="6.5" y="244.9" width="1" height="1" fill="#555"/><text x="7" y="257.2" font-family="Liberation Sans" font-size="10" fill="#444" text-anchor="middle" transform="rotate(-90 7 257.2)" dy="3.5">2</text><rect x="6.5" y="268.5" width="1" height="1" fill="#555"/><rect x="6.5" y="280.4" width="1" height="1" fill="#555"/><rect x="6.5" y="292.2" width="1" height="1" fill="#555"/><path d="M4.5 304.5 H9.5" stroke="#555"/><rect x="6.5" y="315.8" width="1" height="1" fill="#555"/><rect x="6.5" y="327.6" width="1" height="1" fill="#555"/><rect x="6.5" y="339.5" width="1" height="1" fill="#555"/><text x="7" y="351.8" font-family="Liberation Sans" font-size="10" fill="#444" text-anchor="middle" transform="rotate(-90 7 351.8)" dy="3.5">3</text><rect x="6.5" y="363.1" width="1" height="1" fill="#555"/><rect x="6.5" y="375.0" width="1" height="1" fill="#555"/><rect x="6.5" y="386.8" width="1" height="1" fill="#555"/><path d="M4.5 399.1 H9.5" stroke="#555"/><rect x="6.5" y="410.4" width="1" height="1" fill="#555"/><rect x="6.5" y="422.2" width="1" height="1" fill="#555"/><rect x="6.5" y="434.1" width="1" height="1" fill="#555"/><text x="7" y="446.4" font-family="Liberation Sans" font-size="10" fill="#444" text-anchor="middle" transform="rotate(-90 7 446.4)" dy="3.5">4</text><rect x="6.5" y="457.7" width="1" height="1" fill="#555"/><rect x="6.5" y="469.5" width="1" height="1" fill="#555"/><rect x="6.5" y="481.4" width="1" height="1" fill="#555"/><path d="M4.5 493.7 H9.5" stroke="#555"/><rect x="6.5" y="505.0" width="1" height="1" fill="#555"/><rect x="6.5" y="516.8" width="1" height="1" fill="#555"/><rect x="6.5" y="528.7" width="1" height="1" fill="#555"/><text x="7" y="541.0" font-family="Liberation Sans" font-size="10" fill="#444" text-anchor="middle" transform="rotate(-90 7 541.0)" dy="3.5">5</text><rect x="6.5" y="552.3" width="1" height="1" fill="#555"/><rect x="6.5" y="564.1" width="1" height="1" fill="#555"/><rect x="6.5" y="576.0" width="1" height="1" fill="#555"/><path d="M4.5 588.3 H9.5" stroke="#555"/><rect x="6.5" y="55.7" width="1" height="1" fill="#555"/><rect x="6.5" y="43.8" width="1" height="1" fill="#555"/><rect x="6.5" y="32.0" width="1" height="1" fill="#555"/><path d="M4.5 20.7 H9.5" stroke="#555"/><rect x="6.5" y="8.4" width="1" height="1" fill="#555"/></svg>
<div style="position:absolute;left:1587px;top:174px;width:802px;height:593px;background:#ffffff;"></div>
<div style="position:absolute;left:1681px;top:247.2px;font-family:'Liberation Sans', sans-serif;font-size:16.3px;line-height:1;white-space:nowrap;color:#3476b8;transform:scaleX(1.0071);transform-origin:0 0;">The Project.</div>
<div style="position:absolute;left:1681px;top:708.2px;width:625.5px;font-family:'Liberation Sans',sans-serif;font-size:14.7px;line-height:1;color:#1a1a1a;white-space:nowrap;text-align:justify;text-align-last:justify;transform:scaleX(0.9897);transform-origin:0 0">The planned Powder River Basin Project would not burn coal.&nbsp; The plant would consist of</div>
<div style="position:absolute;left:1681px;top:729.4px;width:625.5px;font-family:'Liberation Sans',sans-serif;font-size:14.7px;line-height:1;color:#1a1a1a;white-space:nowrap;text-align:justify;text-align-last:justify;transform:scaleX(0.9897);transform-origin:0 0">environmentally compliant processing lines powered by natural gas that can be permitted under</div>
<div style="position:absolute;left:1681px;top:749.8px;width:625.5px;font-family:'Liberation Sans',sans-serif;font-size:14.7px;line-height:1;color:#1a1a1a;white-space:nowrap;transform:scaleX(0.9897);transform-origin:0 0">the current regulations.&nbsp; The plant would convert coal into value-added products such as:</div>
<div style="position:absolute;left:2379px;top:712px;width:236px;height:44px;background:#ffffff;border:1px solid #d8d8d8"></div>
<div style="position:absolute;left:2379px;top:749px;width:236px;height:7px;background:#0a84d0;"></div>
<svg style="position:absolute;left:2385px;top:721px;" width="22" height="16" viewBox="0 0 22 16"><rect x="0" y="0" width="21" height="15" rx="1" fill="#ffc61e"/><path d="M0.5 1 L10.5 8 L20.5 1" fill="none" stroke="#fff" stroke-width="1.2"/></svg>
<div style="position:absolute;left:2418px;top:719.3px;font-family:'Liberation Sans', sans-serif;font-size:11.2px;line-height:1;white-space:nowrap;color:#333;transform:scaleX(1.0152);transform-origin:0 0;">Laura Hathaway</div>
<div style="position:absolute;left:2421px;top:732.4px;font-family:'Liberation Sans', sans-serif;font-size:9.5px;line-height:1;white-space:nowrap;color:#999;transform:scaleX(0.9783);transform-origin:0 0;">Augusta Precious metals</div>
<svg style="position:absolute;left:2597px;top:716px;" width="15" height="15" viewBox="0 0 15 15"><circle cx="7.5" cy="7.5" r="6" fill="none" stroke="#bbb" stroke-width="0.8"/><path d="M5 5 L10 10 M10 5 L5 10" stroke="#111" stroke-width="1.5"/><path d="M8 1.5 A6 6 0 0 1 13 9" fill="none" stroke="#111" stroke-width="1.2"/></svg>
<div style="position:absolute;left:1323px;top:766.5px;width:1324px;height:21.5px;background:#f0f0f0;"></div>
<div style="position:absolute;left:1329px;top:771.8px;font-family:'Liberation Sans', sans-serif;font-size:11.5px;line-height:1;white-space:nowrap;color:#555;transform:scaleX(0.8893);transform-origin:0 0;">Page 8 of 10</div>
<div style="position:absolute;left:1402.4px;top:771.8px;font-family:'Liberation Sans', sans-serif;font-size:11.5px;line-height:1;white-space:nowrap;color:#555;transform:scaleX(0.8881);transform-origin:0 0;">1762 words</div>
<svg style="position:absolute;left:1471px;top:770px;" width="16" height="14" viewBox="0 0 16 14"><rect x="0.5" y="1.5" width="8" height="11" fill="none" stroke="#666"/><path d="M8.5 2 H13 V12.5 H8.5" fill="none" stroke="#666"/><path d="M9 4 L13 9 M13 4 L9 9" stroke="#444" stroke-width="1.2"/></svg>
<div style="position:absolute;left:2413px;top:766.5px;width:33px;height:21.5px;background:#c8c8c8;"></div>
<svg style="position:absolute;left:2390px;top:770px;" width="14" height="12" viewBox="0 0 14 12"><path d="M1 1 H6 V11 H1 Z M7 1 H12 V11 H7 Z M2 3 H5 M2 5 H5 M2 7 H5 M8 3 H11 M8 5 H11 M8 7 H11" fill="none" stroke="#666"/></svg>
<svg style="position:absolute;left:2422px;top:770px;" width="14" height="12" viewBox="0 0 14 12"><rect x="1" y="1" width="12" height="10" fill="none" stroke="#555"/><path d="M3 3.5 H11 M3 5.5 H11 M3 7.5 H11" stroke="#555"/></svg>
<svg style="position:absolute;left:2455px;top:770px;" width="14" height="12" viewBox="0 0 14 12"><rect x="1" y="1" width="10" height="8" fill="none" stroke="#666"/><path d="M3 4 H9 M3 6 H7" stroke="#666"/><circle cx="11" cy="9" r="2.5" fill="none" stroke="#666"/></svg>
<div style="position:absolute;left:2481.5px;top:776.5px;width:7px;height:1.5px;background:#555;"></div>
<div style="position:absolute;left:2492px;top:776.5px;width:98px;height:1px;background:#aaaaaa;"></div>
<div style="position:absolute;left:2538.5px;top:772px;width:3.5px;height:10px;background:#555;"></div>
<svg style="position:absolute;left:2593px;top:771px;" width="11" height="11" viewBox="0 0 11 11"><path d="M5.5 0.5 V10.5 M0.5 5.5 H10.5" stroke="#555" stroke-width="1.6"/></svg>
<div style="position:absolute;left:2615px;top:771.5px;font-family:'Liberation Sans', sans-serif;font-size:11.2px;line-height:1;white-space:nowrap;color:#555;transform:scaleX(0.8378);transform-origin:0 0;">100%</div>
<div style="position:absolute;left:1323px;top:787.5px;width:1324px;height:40px;background:#060608;"></div>
<svg style="position:absolute;left:1339.5px;top:799.5px;" width="15.5" height="15.5" viewBox="0 0 15.5 15.5"><path d="M0 2.2 L7.1 1.1 V7.1 H0 Z M8.4 0.9 L15.5 0 V7.1 H8.4 Z M0 8.4 H7.1 V14.4 L0 13.3 Z M8.4 8.4 H15.5 V15.5 L8.4 14.6 Z" fill="#fff"/></svg>
<div style="position:absolute;left:1371px;top:787.5px;width:338.5px;height:40px;background:#353535;"></div>
<div style="position:absolute;left:1382.5px;top:800.5px;font-family:'Liberation Sans', sans-serif;font-size:14.2px;line-height:1;white-space:nowrap;color:#a8a8a8;transform:scaleX(0.9778);transform-origin:0 0;">Search the web and Windows</div>
<svg style="position:absolute;left:1722px;top:799px;" width="22" height="18" viewBox="0 0 22 18"><rect x="5" y="1" width="12" height="16" fill="none" stroke="#fff" stroke-width="1.4"/><path d="M3 3 H1 V15 H3 M19 3 H21 V15 H19" fill="none" stroke="#fff" stroke-width="1"/></svg>
<div style="position:absolute;left:1762px;top:796px;width:1px;height:22px;background:#3a3a3a;"></div>
<div style="position:absolute;left:2300px;top:787.5px;width:40px;height:40px;background:#160707;"></div>
<div style="position:absolute;left:2356px;top:787.5px;width:25px;height:40px;background:#1a1a0e;"></div>
<div style="position:absolute;left:2215px;top:787.5px;width:47.5px;height:40px;background:#3c3c40;"></div>
<svg style="position:absolute;left:1786.0px;top:796px;" width="24.0" height="24.0" viewBox="0 0 24 24"><path d="M3 13 C3 6 8 2 13 2 C19 2 22 6 22 11 V14 H8 C8 18 11 20 15 20 C17 20 19 19 21 18 V22 C19 23 17 23.5 14 23.5 C7 23.5 3 19 3 13 Z M8 10 H17 C17 7 15 5.5 12.5 5.5 C10 5.5 8.5 7.5 8 10 Z" fill="#1e90e8"/></svg>
<svg style="position:absolute;left:1835.0px;top:796px;" width="24.0" height="24.0" viewBox="0 0 24 24"><path d="M1 4 H9 L11 6 H23 V21 H1 Z" fill="#f5c84a"/><rect x="1" y="8" width="22" height="13" fill="#ffd866"/><rect x="6" y="13" width="13" height="7" fill="#3aa8e8"/><rect x="9" y="16" width="6" height="4" fill="#ffd866"/></svg>
<svg style="position:absolute;left:1883.0px;top:796px;" width="24.0" height="24.0" viewBox="0 0 24 24"><path d="M3 7 H21 V23 H3 Z" fill="#fff"/><path d="M8 7 V4 C8 1.5 16 1.5 16 4 V7" fill="none" stroke="#fff" stroke-width="1.6"/><path d="M8 11 H11.5 V14.5 H8 Z M12.5 11 H16 V14.5 H12.5 Z M8 15.5 H11.5 V19 H8 Z M12.5 15.5 H16 V19 H12.5 Z" fill="#1a1a1a"/></svg>
<svg style="position:absolute;left:1932.0px;top:796px;" width="24.0" height="24.0" viewBox="0 0 24 24"><rect x="2" y="3" width="20" height="19" fill="#8fb6d8"/><rect x="4" y="5" width="16" height="15" fill="#6fa0cc"/><circle cx="11" cy="12.5" r="6" fill="#f08c20"/><path d="M9 9.5 L14 12.5 L9 15.5 Z" fill="#fff"/></svg>
<svg style="position:absolute;left:1981.0px;top:796px;" width="24.0" height="24.0" viewBox="0 0 24 24"><circle cx="12" cy="12.5" r="10" fill="#e8641c"/><circle cx="13" cy="11" r="6" fill="#2a5aa8"/><path d="M2 12 C4 20 12 24 18 21 C14 21 9 18 9 13 C6 14 4 13 2 12 Z" fill="#f8a030"/></svg>
<svg style="position:absolute;left:2031.0px;top:796px;" width="26.0" height="26.0" viewBox="0 0 26 26"><circle cx="11" cy="11" r="10" fill="#16a4e8"/><text x="11" y="16" font-family="Liberation Sans" font-size="15" font-weight="bold" fill="#fff" text-anchor="middle">S</text><circle cx="19.5" cy="19.5" r="5" fill="#f7b400"/><text x="19.5" y="22.5" font-family="Liberation Sans" font-size="8" font-weight="bold" fill="#222" text-anchor="middle">5</text></svg>
<svg style="position:absolute;left:2080.0px;top:796px;" width="26.0" height="24.0" viewBox="0 0 26 24"><rect x="1" y="3" width="13" height="16" fill="#0a64c8"/><text x="7.5" y="15.5" font-family="Liberation Sans" font-size="11" font-weight="bold" fill="#fff" text-anchor="middle">O</text><rect x="13" y="5" width="7" height="7" fill="#fff"/><path d="M14 7 L17 10 L20 6" stroke="#0a64c8" fill="none"/><rect x="11" y="13" width="14" height="10" fill="#f4c680"/><path d="M11 13 L18 18 L25 13" stroke="#fff" fill="none" stroke-width="1.2"/></svg>
<svg style="position:absolute;left:2128.5px;top:796px;" width="24.0" height="24.0" viewBox="0 0 24 24"><rect x="9" y="3" width="14" height="18" fill="#fff"/><path d="M11 7 H21 M11 10 H21 M11 13 H21 M11 16 H21" stroke="#2b579a" stroke-width="1.4"/><rect x="1" y="4" width="13" height="16" fill="#2b579a"/><text x="7.5" y="16.5" font-family="Liberation Sans" font-size="10" font-weight="bold" fill="#fff" text-anchor="middle">W</text></svg>
<svg style="position:absolute;left:2176.5px;top:796px;" width="24.0" height="24.0" viewBox="0 0 24 24"><rect x="1" y="1" width="22" height="22" fill="#3a4aa8"/><rect x="5" y="5" width="14" height="12" fill="#5aa8f8"/><rect x="6" y="6" width="12" height="10" fill="#bfe0ff"/><path d="M9 19 H15" stroke="#bfe0ff" stroke-width="2"/></svg>
<svg style="position:absolute;left:2226.0px;top:796px;" width="24.0" height="24.0" viewBox="0 0 24 24"><rect x="1" y="1" width="22" height="22" fill="#e8141c"/><rect x="3" y="3" width="18" height="18" fill="#2a0a0a"/><path d="M5 18 C9 12 12 6 12 4 C12 9 15 15 20 16 C15 15 9 16 5 18 Z" fill="none" stroke="#f04040" stroke-width="1.6"/></svg>
<div style="position:absolute;left:1778px;top:825px;width:40px;height:2.5px;background:#7aaef0;"></div>
<div style="position:absolute;left:1827px;top:825px;width:40px;height:2.5px;background:#7aaef0;"></div>
<div style="position:absolute;left:2023px;top:825px;width:40px;height:2.5px;background:#7aaef0;"></div>
<div style="position:absolute;left:2072px;top:825px;width:40px;height:2.5px;background:#7aaef0;"></div>
<div style="position:absolute;left:2120.5px;top:825px;width:40px;height:2.5px;background:#7aaef0;"></div>
<div style="position:absolute;left:2168.5px;top:825px;width:40px;height:2.5px;background:#7aaef0;"></div>
<div style="position:absolute;left:2218px;top:825px;width:40px;height:2.5px;background:#7aaef0;"></div>
<div style="position:absolute;left:2384px;top:795px;width:1px;height:28px;background:#3a3a3a;"></div>
<div style="position:absolute;left:2393px;top:799.1px;font-family:'Liberation Sans', sans-serif;font-size:13.5px;line-height:1;white-space:nowrap;color:#dddddd;transform:scaleX(0.8682);transform-origin:0 0;">Desktop</div>
<div style="position:absolute;left:2443px;top:789.0px;font-family:'Liberation Sans', sans-serif;font-size:13px;line-height:1;white-space:nowrap;color:#dddddd;">&raquo;</div>
<svg style="position:absolute;left:2460px;top:799px;" width="18" height="14" viewBox="0 0 18 14"><path d="M2 11 L9 4 L16 11" fill="none" stroke="#fff" stroke-width="1.5"/></svg>
<svg style="position:absolute;left:2482px;top:798px;" width="20" height="18" viewBox="0 0 20 18"><path d="M2 6 H5 L9 2 V16 L5 12 H2 Z" fill="none" stroke="#fff" stroke-width="1.3"/><path d="M12 6 C13.5 7.5 13.5 10.5 12 12 M14.5 4 C17 6.5 17 11.5 14.5 14" fill="none" stroke="#fff" stroke-width="1.2"/></svg>
<svg style="position:absolute;left:2507px;top:798px;" width="16" height="17" viewBox="0 0 16 17"><path d="M4 1 L8 4 L4 7 L0 4 Z M12 1 L16 4 L12 7 L8 4 Z M4 7 L8 10 L4 13 L0 10 Z M12 7 L16 10 L12 13 L8 10 Z" fill="#fff"/><circle cx="12" cy="13" r="3.5" fill="#3bb54a"/></svg>
<svg style="position:absolute;left:2529px;top:798px;" width="20" height="18" viewBox="0 0 20 18"><rect x="4" y="1" width="15" height="10" fill="none" stroke="#fff" stroke-width="1.3"/><path d="M11 11 V15 M7 15 H15 M1 4 H3 M1 4 V9" fill="none" stroke="#fff" stroke-width="1.2"/></svg>
<svg style="position:absolute;left:2553px;top:797px;" width="18" height="18" viewBox="0 0 18 18"><path d="M1 1 H17 V12 H9 L5 16 V12 H1 Z M4 5 H14 M4 8 H14" fill="none" stroke="#fff" stroke-width="1.2"/></svg>
<div style="position:absolute;left:2588px;top:792.7px;font-family:'Liberation Sans', sans-serif;font-size:12.2px;line-height:1;white-space:nowrap;color:#ffffff;transform:scaleX(0.8804);transform-origin:0 0;">5:13 PM</div>
<div style="position:absolute;left:2581.7px;top:807.7px;font-family:'Liberation Sans', sans-serif;font-size:12.2px;line-height:1;white-space:nowrap;color:#ffffff;transform:scaleX(0.9636);transform-origin:0 0;">5/30/2016</div>
<div style="position:absolute;left:2643px;top:787.5px;width:1px;height:40px;background:#444;"></div>
<svg style="position:absolute;left:1672px;top:230px;overflow:hidden" width="680" height="445" viewBox="1672 230 680 445"><defs>
<pattern id="Wcross" width="12" height="12" patternUnits="userSpaceOnUse">
<path d="M6 1.2 V4.8 M4.2 3 H7.8 M0 7.2 V10.8 M-1.8 9 H1.8 M12 7.2 V10.8 M10.2 9 H13.8" stroke="#484848" stroke-width="1.3"/></pattern>
<pattern id="Whatch" width="9.5" height="9.5" patternUnits="userSpaceOnUse">
<path d="M0 0 L9.5 9.5 M9.5 0 L0 9.5" stroke="#222" stroke-width="0.9"/></pattern>
<pattern id="Wstripe" width="6" height="4" patternUnits="userSpaceOnUse">
<path d="M0 1 H6" stroke="#ffffff" stroke-width="1"/></pattern>
<pattern id="Wdots" width="3" height="3" patternUnits="userSpaceOnUse">
<rect x="0" y="0" width="1.5" height="1.5" fill="#ffffff" opacity="0.7"/></pattern>
</defs><clipPath id="wclip"><rect x="1681" y="273" width="619" height="397"/></clipPath><g clip-path="url(#wclip)"><rect x="1681" y="273" width="619" height="397" fill="#fff"/><polygon points="1974.4,276.5 2033.4,276.5 2033.4,286.2 2054.4,286.2 2054.4,295.8 2064.9,295.8 2064.9,306.3 2160.4,306.3 2160.4,344.5 2085.0,344.5 2085.0,384.7 1973.6,384.7 1973.6,373.4 1983.3,373.4 1983.3,363.7 1973.6,363.7 1973.6,306.3" fill="#ac80e6" stroke="#111" stroke-width="2.5" /><polygon points="1974.4,276.5 2033.4,276.5 2033.4,286.2 2054.4,286.2 2054.4,295.8 2064.9,295.8 2064.9,306.3 2160.4,306.3 2160.4,344.5 2085.0,344.5 2085.0,384.7 1973.6,384.7 1973.6,373.4 1983.3,373.4 1983.3,363.7 1973.6,363.7 1973.6,306.3" fill="url(#Wstripe)" stroke="none" stroke-width="0" opacity="0.45"/><polygon points="1983.3,373.4 1993.0,349.0 2009.0,344.3 2010.8,326.5 2017.2,321.7 2027.0,325.0 2043.0,346.0 2075.4,357.2 2090.0,363.7 2090.0,384.7 1983.3,384.7" fill="url(#Wcross)" stroke="#333" stroke-width="0.8" /><polygon points="1976.0,297.5 1984.0,297.5 1984.0,306.0 1976.0,306.0" fill="#e890f2" stroke="none" stroke-width="0" /><polygon points="1952.6,306.3 1973.6,306.3 1973.6,354.0 1957.5,354.0 1957.5,336.2 1952.6,336.2 1952.6,323.3 1947.8,323.3 1947.8,315.2 1952.6,315.2" fill="#e890f2" stroke="#111" stroke-width="2.5" /><polygon points="1954.2,365.3 1962.3,365.3 1962.3,375.0 1973.6,375.0 1973.6,384.7 2002.0,384.7 2002.0,440.4 1996.0,440.4 1993.0,435.0 1981.7,429.0 1981.7,414.2 1954.2,414.2" fill="#e890f2" stroke="#111" stroke-width="2.5" /><polygon points="2002.0,424.4 2022.4,424.4 2022.4,452.0 2002.0,452.0" fill="#c890e0" stroke="#111" stroke-width="1.5" /><polygon points="2083.4,344.5 2199.7,344.5 2199.7,402.6 2160.4,402.6 2160.4,393.9 2153.0,391.0 2146.0,376.4 2121.0,375.0 2118.0,382.0 2088.0,385.2 2088.0,392.0 2068.0,393.0 2068.0,417.0 2066.0,417.0 2066.0,482.5 2022.4,482.5 2022.4,425.0 2043.0,425.0 2043.0,384.7 2085.0,384.7" fill="#8656c6" stroke="#111" stroke-width="2.5" /><polygon points="2083.4,344.5 2199.7,344.5 2199.7,402.6 2160.4,402.6 2160.4,393.9 2153.0,391.0 2146.0,376.4 2121.0,375.0 2118.0,382.0 2088.0,385.2 2088.0,392.0 2068.0,393.0 2068.0,417.0 2066.0,417.0 2066.0,482.5 2022.4,482.5 2022.4,425.0 2043.0,425.0 2043.0,384.7 2085.0,384.7" fill="url(#Wdots)" stroke="none" stroke-width="0" opacity="0.5"/><polygon points="2043.0,384.7 2066.0,384.7 2066.0,482.5 2022.4,482.5 2022.4,425.0 2043.0,425.0" fill="url(#Wcross)" stroke="none" stroke-width="0" /><polygon points="2002.0,384.7 2043.0,384.7 2043.0,424.4 2002.0,424.4" fill="#ffffff" stroke="#111" stroke-width="1.5" /><polygon points="2002.0,384.7 2043.0,384.7 2043.0,424.4 2002.0,424.4" fill="url(#Wcross)" stroke="none" stroke-width="0" /><polygon points="2068.0,393.0 2088.0,392.0 2088.0,385.2 2118.0,382.0 2121.0,375.0 2146.0,376.4 2153.0,391.0 2160.4,393.9 2160.4,402.6 2131.0,420.0 2125.0,460.0 2110.0,470.0 2100.0,484.0 2066.0,484.0 2066.0,417.0 2068.0,417.0" fill="#ffffff" stroke="#111" stroke-width="1.2" /><polygon points="2068.0,393.0 2088.0,392.0 2088.0,385.2 2118.0,382.0 2121.0,375.0 2130.0,390.0 2130.0,480.0 2066.0,484.0 2066.0,417.0 2068.0,417.0" fill="url(#Wcross)" stroke="none" stroke-width="0" /><polygon points="1932.3,414.2 1981.7,414.2 1981.7,429.0 1993.0,435.0 1996.0,440.4 2002.0,440.4 2002.0,452.0 2022.4,452.0 2022.4,483.2 1923.6,483.2 1923.6,434.6 1932.3,434.6" fill="#88eea6" stroke="#111" stroke-width="2.5" /><polygon points="1982.6,483.2 2082.0,483.2 2090.7,490.4 2090.7,503.4 2082.0,503.4 2082.0,552.4 1982.6,552.4" fill="#b6eea6" stroke="#111" stroke-width="2" /><polygon points="1992.7,512.0 2007.0,512.0 2007.0,532.0 1992.7,532.0" fill="#ffffff" stroke="none" stroke-width="0" /><polygon points="2013.0,512.0 2033.0,512.0 2033.0,526.5 2013.0,526.5" fill="#ffffff" stroke="none" stroke-width="0" /><polygon points="2050.0,503.4 2070.5,503.4 2070.5,523.6 2050.0,523.6" fill="#ffffff" stroke="none" stroke-width="0" /><polygon points="2003.0,540.0 2030.0,540.0 2030.0,552.0 2003.0,552.0" fill="#ffffff" stroke="none" stroke-width="0" /><polygon points="1982.6,483.2 2082.0,483.2 2090.7,490.4 2090.7,503.4 2082.0,503.4 2082.0,552.4 1982.6,552.4" fill="url(#Wcross)" stroke="none" stroke-width="0" /><polygon points="1923.6,464.5 1982.6,464.5 1982.6,523.6 1923.6,523.6" fill="#30e030" stroke="#111" stroke-width="2" /><polygon points="1923.6,464.5 1982.6,464.5 1982.6,523.6 1923.6,523.6" fill="url(#Wstripe)" stroke="none" stroke-width="0" opacity="0.35"/><polygon points="1945.0,466.0 1982.0,466.0 1982.0,523.0 1945.0,523.0" fill="url(#Wcross)" stroke="none" stroke-width="0" /><polygon points="1982.6,464.5 1992.7,464.5 1992.7,483.0 1982.6,483.0" fill="#ffffff" stroke="none" stroke-width="0" /><polygon points="1923.6,523.6 1992.7,523.6 1992.7,542.3 1923.6,542.3" fill="#ffffff" stroke="none" stroke-width="0" /><polygon points="1923.6,523.6 1992.7,523.6 1992.7,542.3 1923.6,542.3" fill="url(#Wcross)" stroke="none" stroke-width="0" /><polygon points="1853.0,440.0 1876.0,440.0 1876.0,446.0 1923.6,446.0 1923.6,503.4 1881.8,503.4 1881.8,523.6 1873.0,523.6 1873.0,503.4 1853.0,503.4" fill="#6c6c6c" stroke="#111" stroke-width="3" /><polygon points="1890.4,516.4 1923.6,516.4 1923.6,542.3 1912.0,542.3 1912.0,562.5 1890.4,562.5" fill="#ffffff" stroke="#333" stroke-width="1" /><polygon points="1890.4,516.4 1923.6,516.4 1923.6,542.3 1912.0,542.3 1912.0,562.5 1890.4,562.5" fill="url(#Wcross)" stroke="none" stroke-width="0" /><polygon points="1912.0,542.3 1923.6,542.3 1923.6,535.0 1942.3,535.0 1942.3,542.3 1981.2,542.3 1981.2,582.6 1912.0,582.6" fill="#3cbc3c" stroke="#111" stroke-width="2.5" /><polygon points="1912.0,542.3 1923.6,542.3 1923.6,535.0 1942.3,535.0 1942.3,542.3 1981.2,542.3 1981.2,582.6 1912.0,582.6" fill="url(#Wstripe)" stroke="none" stroke-width="0" opacity="0.35"/><polygon points="1912.0,542.3 1923.6,542.3 1923.6,535.0 1942.3,535.0 1942.3,542.3 1981.2,542.3 1981.2,582.6 1912.0,582.6" fill="url(#Wcross)" stroke="none" stroke-width="0" opacity="0.6"/><polygon points="1981.2,552.4 2041.7,552.4 2041.7,555.3 2090.7,555.3 2090.7,581.2 2100.8,581.2 2100.8,572.6 2121.0,572.6 2121.0,581.2 2131.0,581.2 2131.0,589.9 2151.2,589.9 2151.2,598.5 2159.9,598.5 2159.9,620.1 2041.7,620.1 2041.7,618.7 1981.2,618.7" fill="#e8663a" stroke="#111" stroke-width="2.5" /><polygon points="1981.2,552.4 2041.7,552.4 2041.7,555.3 2090.7,555.3 2090.7,581.2 2100.8,581.2 2100.8,572.6 2121.0,572.6 2121.0,581.2 2131.0,581.2 2131.0,589.9 2151.2,589.9 2151.2,598.5 2159.9,598.5 2159.9,620.1 2041.7,620.1 2041.7,618.7 1981.2,618.7" fill="url(#Wstripe)" stroke="none" stroke-width="0" opacity="0.4"/><polygon points="1981.2,552.4 2041.7,552.4 2041.7,555.3 2090.7,555.3 2090.7,581.2 2100.8,581.2 2100.8,572.6 2121.0,572.6 2121.0,581.2 2131.0,581.2 2131.0,589.9 2151.2,589.9 2151.2,598.5 2159.9,598.5 2159.9,620.1 2041.7,620.1 2041.7,618.7 1981.2,618.7" fill="url(#Wcross)" stroke="none" stroke-width="0" opacity="0.6"/><polygon points="2100.8,581.0 2111.0,581.0 2111.0,590.0 2100.8,590.0" fill="#ffffff" stroke="none" stroke-width="0" /><polygon points="2121.0,601.4 2129.6,601.4 2129.6,618.7 2121.0,618.7" fill="#ffffff" stroke="none" stroke-width="0" /><polygon points="2041.7,620.1 2159.9,620.1 2159.9,670.0 2041.7,670.0" fill="#f09448" stroke="#111" stroke-width="1" /><polygon points="2041.7,620.1 2159.9,620.1 2159.9,670.0 2041.7,670.0" fill="url(#Wstripe)" stroke="none" stroke-width="0" opacity="0.4"/><polygon points="2041.7,620.1 2159.9,620.1 2159.9,670.0 2041.7,670.0" fill="url(#Wcross)" stroke="none" stroke-width="0" opacity="0.6"/><polygon points="2152.0,638.8 2159.0,638.8 2159.0,649.0 2152.0,649.0" fill="#ffffff" stroke="#111" stroke-width="1.5" /><polygon points="1951.0,584.0 1981.2,584.0 1981.2,621.6 1951.0,621.6" fill="#e2a224" stroke="#111" stroke-width="2.5" /><polygon points="1962.0,613.0 1970.0,613.0 1970.0,621.0 1962.0,621.0" fill="#ffffff" stroke="none" stroke-width="0" /><polygon points="2013.0,661.0 2041.7,661.0 2041.7,670.0 2013.0,670.0" fill="#e2a224" stroke="#111" stroke-width="1.5" /><polygon points="1940.9,621.6 2000.0,621.6 2000.0,662.0 1961.0,662.0 1961.0,638.8 1940.9,638.8" fill="#ffffff" stroke="none" stroke-width="0" /><polygon points="1940.9,621.6 2000.0,621.6 2000.0,662.0 1961.0,662.0 1961.0,638.8 1940.9,638.8" fill="url(#Whatch)" stroke="#111" stroke-width="2.5" /><polygon points="2000.0,621.6 2041.7,621.6 2041.7,662.0 2000.0,662.0" fill="#ffffff" stroke="#111" stroke-width="2.5" /><polygon points="2000.0,621.6 2041.7,621.6 2041.7,662.0 2000.0,662.0" fill="url(#Wcross)" stroke="none" stroke-width="0" /><path d="M1717 273 V307.5" stroke="#f5892a" stroke-width="1.6"/><path d="M1757 273 V307.5" stroke="#f5892a" stroke-width="1.6"/><path d="M1797 273 V307.5" stroke="#f5892a" stroke-width="1.6"/><path d="M1837 273 V307.5" stroke="#f5892a" stroke-width="1.6"/><path d="M1876 273 V307.5" stroke="#f5892a" stroke-width="1.6"/><path d="M1914.6 273 V307.5" stroke="#8a4a14" stroke-width="2.2"/><path d="M1954.6 273 V307.5" stroke="#f5892a" stroke-width="1.6"/><path d="M1994.5 273 V307.5" stroke="#f5892a" stroke-width="1.6"/><path d="M2034.5 273 V307.5" stroke="#f5892a" stroke-width="1.6"/><path d="M2074 273 V307.5" stroke="#f5892a" stroke-width="1.6"/><path d="M2114 273 V307.5" stroke="#f5892a" stroke-width="1.6"/><path d="M2154 273 V307.5" stroke="#8a4a14" stroke-width="2.2"/><path d="M2194 273 V307.5" stroke="#f5892a" stroke-width="1.6"/><path d="M2233.7 273 V307.5" stroke="#f5892a" stroke-width="1.6"/><path d="M2273.6 273 V307.5" stroke="#f5892a" stroke-width="1.6"/><path d="M1726 307.5 L1724 670" stroke="#f5892a" stroke-width="1.6"/><path d="M1766 307.5 L1764 670" stroke="#f5892a" stroke-width="1.6"/><path d="M1806 307.5 L1804 670" stroke="#f5892a" stroke-width="1.6"/><path d="M1846 307.5 L1844 670" stroke="#f5892a" stroke-width="1.6"/><path d="M1884.7 307.5 L1882.7 670" stroke="#f5892a" stroke-width="1.6"/><path d="M1924 307.5 L1922 670" stroke="#8a4a14" stroke-width="2.2"/><path d="M1963 307.5 L1961 670" stroke="#f5892a" stroke-width="1.6"/><path d="M2003 307.5 L2001 670" stroke="#f5892a" stroke-width="1.6"/><path d="M2043 307.5 L2041 670" stroke="#f5892a" stroke-width="1.6"/><path d="M2082 307.5 L2080 670" stroke="#f5892a" stroke-width="1.6"/><path d="M2122 307.5 L2120 670" stroke="#f5892a" stroke-width="1.6"/><path d="M2160 307.5 L2158 670" stroke="#8a4a14" stroke-width="2.2"/><path d="M2200 307.5 L2198 670" stroke="#f5892a" stroke-width="1.6"/><path d="M2239 307.5 L2237 670" stroke="#f5892a" stroke-width="1.6"/><path d="M2279 307.5 L2277 670" stroke="#f5892a" stroke-width="1.6"/><path d="M1682 307.5 H2300" stroke="#8a4a14" stroke-width="2.2"/><path d="M1682 346 H2300" stroke="#f5892a" stroke-width="1.6"/><path d="M1682 385.5 H2300" stroke="#f5892a" stroke-width="1.6"/><path d="M1682 424.8 H2300" stroke="#f5892a" stroke-width="1.6"/><path d="M1682 464.6 H2300" stroke="#f5892a" stroke-width="1.6"/><path d="M1682 503.4 H2300" stroke="#f5892a" stroke-width="1.6"/><path d="M1682 542.3 H2300" stroke="#8a4a14" stroke-width="2.2"/><path d="M1682 582.4 H2300" stroke="#f5892a" stroke-width="1.6"/><path d="M1682 622.2 H2300" stroke="#f5892a" stroke-width="1.6"/><path d="M1682 661.8 H2300" stroke="#f5892a" stroke-width="1.6"/><polyline points="2201.7,441.4 2169.4,458.8 2144.6,478.6 2132.0,508.5 2132.0,548.0 2149.5,573.0 2159.5,598.0 2162.0,630.0 2162.0,670.0" fill="none" stroke="#777" stroke-width="4.5" stroke-linejoin="round"/><path d="M2200 443 L2213 458" stroke="#111" stroke-width="4"/><polyline points="2234.0,273.0 2239.0,300.0 2244.0,359.0 2241.5,399.0 2239.0,429.0 2220.0,437.0 2201.7,442.0" fill="none" stroke="#666" stroke-width="1.6" /><path d="M2233 284 L2239 286" stroke="#555" stroke-width="0.9"/><path d="M2237 309 L2243 311" stroke="#555" stroke-width="0.9"/><path d="M2239 329 L2245 331" stroke="#555" stroke-width="0.9"/><path d="M2240.5 349 L2246.5 351" stroke="#555" stroke-width="0.9"/><path d="M2240 371 L2246 373" stroke="#555" stroke-width="0.9"/><path d="M2239 391 L2245 393" stroke="#555" stroke-width="0.9"/><path d="M2237 411 L2243 413" stroke="#555" stroke-width="0.9"/><path d="M2222 434 L2228 436" stroke="#555" stroke-width="0.9"/><path d="M2207 438 L2213 440" stroke="#555" stroke-width="0.9"/><polyline points="2080.0,493.6 2134.6,501.0 2199.0,508.4 2219.0,528.0 2260.0,540.0 2300.0,548.0" fill="none" stroke="#666" stroke-width="1" /><polyline points="1940.4,274.8 1928.4,304.0 1923.4,324.0 1921.6,349.0 1906.0,447.0 1886.0,553.0 1884.0,563.0" fill="none" stroke="#555" stroke-width="1" /><polyline points="1910.0,380.0 1950.0,420.0 1990.0,460.0" fill="none" stroke="#555" stroke-width="1" /><polyline points="2110.0,560.0 2130.0,545.0 2100.0,520.0" fill="none" stroke="#555" stroke-width="1" /><path d="M1686 308 L1684 350 L1683 472" stroke="#1414f5" stroke-width="2.5" fill="none"/><path d="M1684 307 H1690" stroke="#1414f5" stroke-width="2.5"/><polyline points="2300.0,498.0 2240.0,498.0 2240.0,658.0 2300.0,658.0" fill="none" stroke="#1414f5" stroke-width="2.5" /><polygon points="1766.0,316.0 1905.6,316.0 1905.6,416.0 1766.0,416.0" fill="none" stroke="#b070e0" stroke-width="1" /><path d="M1766 333.4 H1905.6" stroke="#b070e0" stroke-width="1"/><path d="M1766 343.4 H1905.6" stroke="#b070e0" stroke-width="1"/><path d="M1766 365.8 H1905.6" stroke="#b070e0" stroke-width="1"/><path d="M1766 383.3 H1905.6" stroke="#b070e0" stroke-width="1"/><path d="M1766 396.8 H1905.6" stroke="#b070e0" stroke-width="1"/><text x="1806.8" y="331.0" font-family="Liberation Serif" font-size="16" fill="#a060e0" textLength="59" lengthAdjust="spacingAndGlyphs">Caballo</text><text x="1880.0" y="330.0" font-family="Liberation Sans" font-size="6" fill="#111" >LMU</text><text x="1770.0" y="342.0" font-family="Liberation Sans" font-size="8.5" fill="#b070e0" textLength="133" lengthAdjust="spacingAndGlyphs">Peabody Caballo Mining LLC</text><text x="1793.0" y="353.4" font-family="Liberation Sans" font-size="11" fill="#b070e0" textLength="105" lengthAdjust="spacingAndGlyphs">Subsidiary of:</text><text x="1766.0" y="363.4" font-family="Liberation Sans" font-size="11" fill="#b070e0" textLength="139" lengthAdjust="spacingAndGlyphs">Peabody Energy Corp</text><text x="1768.4" y="379.8" font-family="Liberation Sans" font-size="10.5" fill="#444" textLength="127" lengthAdjust="spacingAndGlyphs">Permit Capacity  35MM</text><text x="1768.4" y="394.8" font-family="Liberation Sans" font-size="10.5" fill="#444" textLength="76" lengthAdjust="spacingAndGlyphs">'15 Production</text><text x="1869.0" y="393.0" font-family="Liberation Sans" font-size="10" fill="#444" textLength="37" lengthAdjust="spacingAndGlyphs">11.4MM</text><text x="1768.4" y="406.5" font-family="Liberation Sans" font-size="6.5" fill="#222" textLength="60" lengthAdjust="spacingAndGlyphs">Change in Production</text><text x="1768.4" y="412.5" font-family="Liberation Sans" font-size="6.5" fill="#222" textLength="33" lengthAdjust="spacingAndGlyphs">From 2014</text><text x="1861.0" y="409.0" font-family="Liberation Sans" font-size="10" fill="#444" textLength="40" lengthAdjust="spacingAndGlyphs">+3.5MM</text><polygon points="1698.5,491.7 1838.3,491.7 1838.3,576.5 1698.5,576.5" fill="none" stroke="#30d030" stroke-width="1" /><path d="M1698.5 510.6 H1838.3" stroke="#30d030" stroke-width="1"/><path d="M1698.5 526.6 H1838.3" stroke="#30d030" stroke-width="1"/><path d="M1698.5 543 H1838.3" stroke="#30d030" stroke-width="1"/><path d="M1698.5 560.6 H1838.3" stroke="#30d030" stroke-width="1"/><text x="1731.0" y="504.0" font-family="Liberation Serif" font-size="15" fill="#22c822" textLength="72" lengthAdjust="spacingAndGlyphs">Belle Ayr</text><text x="1815.0" y="503.0" font-family="Liberation Sans" font-size="6" fill="#111" >LMU</text><text x="1700.0" y="521.6" font-family="Liberation Sans" font-size="11" fill="#30d030" textLength="136" lengthAdjust="spacingAndGlyphs">Alpha Coal West Inc.</text><text x="1702.0" y="537.0" font-family="Liberation Sans" font-size="10.5" fill="#444" textLength="122" lengthAdjust="spacingAndGlyphs">Permit Capacity  35MM</text><text x="1702.0" y="555.6" font-family="Liberation Sans" font-size="10.5" fill="#444" textLength="77" lengthAdjust="spacingAndGlyphs">'15 Production</text><text x="1797.0" y="555.6" font-family="Liberation Sans" font-size="10" fill="#444" textLength="38" lengthAdjust="spacingAndGlyphs">18.3MM</text><text x="1701.0" y="566.5" font-family="Liberation Sans" font-size="6.5" fill="#222" textLength="62" lengthAdjust="spacingAndGlyphs">Change in Production</text><text x="1701.0" y="572.5" font-family="Liberation Sans" font-size="6.5" fill="#222" textLength="34" lengthAdjust="spacingAndGlyphs">From 2014</text><text x="1795.0" y="570.5" font-family="Liberation Sans" font-size="10" fill="#444" textLength="40" lengthAdjust="spacingAndGlyphs">+2.6MM</text><text x="1746.0" y="460.7" font-family="Liberation Serif" font-size="10" fill="#111" font-weight="bold" textLength="75" lengthAdjust="spacingAndGlyphs">Belle Ayr West</text><text x="1730.0" y="471.2" font-family="Liberation Serif" font-size="10" fill="#111" font-weight="bold" textLength="107" lengthAdjust="spacingAndGlyphs">Lease By Application</text><path d="M1821 458 L1853 450" stroke="#111" stroke-width="1"/><polygon points="1954.0,304.0 1986.0,304.0 1986.0,312.0 1954.0,312.0" fill="#ffffff" stroke="none" stroke-width="0" opacity="0.9"/><text x="1955.0" y="311.0" font-family="Liberation Mono" font-size="7" fill="#222" textLength="30" lengthAdjust="spacingAndGlyphs">W-122588</text><polygon points="2044.0,321.0 2086.0,321.0 2086.0,329.0 2044.0,329.0" fill="#ffffff" stroke="none" stroke-width="0" opacity="0.9"/><text x="2045.0" y="328.0" font-family="Liberation Mono" font-size="7" fill="#222" textLength="40" lengthAdjust="spacingAndGlyphs">W-78633</text><polygon points="2039.0,369.0 2079.0,369.0 2079.0,377.0 2039.0,377.0" fill="#ffffff" stroke="none" stroke-width="0" opacity="0.9"/><text x="2040.0" y="376.0" font-family="Liberation Mono" font-size="7" fill="#222" textLength="38" lengthAdjust="spacingAndGlyphs">W-83294</text><polygon points="2109.0,366.0 2138.0,366.0 2138.0,374.0 2109.0,374.0" fill="#ffffff" stroke="none" stroke-width="0" opacity="0.9"/><text x="2110.0" y="373.0" font-family="Liberation Mono" font-size="7" fill="#222" textLength="27" lengthAdjust="spacingAndGlyphs">W-63397</text><polygon points="1957.0,394.0 1997.0,394.0 1997.0,402.0 1957.0,402.0" fill="#ffffff" stroke="none" stroke-width="0" opacity="0.9"/><text x="1958.0" y="401.0" font-family="Liberation Mono" font-size="7" fill="#222" textLength="38" lengthAdjust="spacingAndGlyphs">W-172657</text><polygon points="1984.0,399.0 2020.0,399.0 2020.0,407.0 1984.0,407.0" fill="#ffffff" stroke="none" stroke-width="0" opacity="0.9"/><text x="1985.0" y="406.0" font-family="Liberation Mono" font-size="7" fill="#222" textLength="34" lengthAdjust="spacingAndGlyphs">W-83394</text><polygon points="1937.0,444.0 1979.0,444.0 1979.0,452.0 1937.0,452.0" fill="#ffffff" stroke="none" stroke-width="0" opacity="0.9"/><text x="1938.0" y="451.0" font-family="Liberation Mono" font-size="7" fill="#222" textLength="40" lengthAdjust="spacingAndGlyphs">W-161248</text><polygon points="1934.0,489.0 1970.0,489.0 1970.0,497.0 1934.0,497.0" fill="#ffffff" stroke="none" stroke-width="0" opacity="0.9"/><text x="1935.0" y="496.0" font-family="Liberation Mono" font-size="7" fill="#222" textLength="34" lengthAdjust="spacingAndGlyphs">W-80934</text><polygon points="2012.0,489.0 2056.0,489.0 2056.0,497.0 2012.0,497.0" fill="#ffffff" stroke="none" stroke-width="0" opacity="0.9"/><text x="2013.0" y="496.0" font-family="Liberation Mono" font-size="7" fill="#222" textLength="42" lengthAdjust="spacingAndGlyphs">W-0217682</text><polygon points="1867.0,474.0 1905.0,474.0 1905.0,482.0 1867.0,482.0" fill="#ffffff" stroke="none" stroke-width="0" opacity="0.9"/><text x="1868.0" y="481.0" font-family="Liberation Mono" font-size="7" fill="#222" textLength="36" lengthAdjust="spacingAndGlyphs">W-180238</text><polygon points="1911.0,580.0 1940.0,580.0 1940.0,588.0 1911.0,588.0" fill="#ffffff" stroke="none" stroke-width="0" opacity="0.9"/><text x="1912.0" y="587.0" font-family="Liberation Mono" font-size="7" fill="#222" textLength="27" lengthAdjust="spacingAndGlyphs">W-78636</text><polygon points="2026.0,580.0 2062.0,580.0 2062.0,588.0 2026.0,588.0" fill="#ffffff" stroke="none" stroke-width="0" opacity="0.9"/><text x="2027.0" y="587.0" font-family="Liberation Mono" font-size="7" fill="#222" textLength="34" lengthAdjust="spacingAndGlyphs">W-78637</text><polygon points="1959.0,629.0 1991.0,629.0 1991.0,637.0 1959.0,637.0" fill="#ffffff" stroke="none" stroke-width="0" opacity="0.9"/><text x="1960.0" y="636.0" font-family="Liberation Mono" font-size="7" fill="#222" textLength="30" lengthAdjust="spacingAndGlyphs">W-180711</text><text x="1696.0" y="288.0" font-family="Liberation Sans" font-size="6" fill="#f07a20" >36</text><text x="1897.0" y="288.0" font-family="Liberation Sans" font-size="6" fill="#f07a20" >36</text><text x="1936.0" y="288.0" font-family="Liberation Sans" font-size="6" fill="#f07a20" >31</text><text x="2137.0" y="288.0" font-family="Liberation Sans" font-size="6" fill="#f07a20" >36</text><text x="2174.0" y="288.0" font-family="Liberation Sans" font-size="6" fill="#f07a20" >31</text><text x="1705.0" y="328.0" font-family="Liberation Sans" font-size="6" fill="#f07a20" >6</text><text x="1940.0" y="328.0" font-family="Liberation Sans" font-size="6" fill="#f07a20" >6</text><text x="2180.0" y="326.0" font-family="Liberation Sans" font-size="6" fill="#f07a20" >6</text><text x="2138.0" y="522.0" font-family="Liberation Sans" font-size="6" fill="#f07a20" >36</text><text x="2178.0" y="521.0" font-family="Liberation Sans" font-size="6" fill="#f07a20" >31</text><text x="1900.0" y="522.0" font-family="Liberation Sans" font-size="6" fill="#f07a20" >36</text><text x="2140.0" y="564.0" font-family="Liberation Sans" font-size="6" fill="#f07a20" >1</text><text x="2180.0" y="560.0" font-family="Liberation Sans" font-size="6" fill="#f07a20" >6</text><text x="0" y="0" font-family="Liberation Sans" font-size="8" fill="#333" transform="translate(2229 324) rotate(-90)" textLength="48" lengthAdjust="spacing">BNSF SINGLE</text><text x="0" y="0" font-family="Liberation Sans" font-size="8" fill="#333" transform="translate(2183 660) rotate(-90)" textLength="80" lengthAdjust="spacing">DOUBLE  TRACKS</text><text x="0" y="0" font-family="Liberation Sans" font-size="8" fill="#333" transform="translate(2164 493) rotate(-40)" textLength="46" lengthAdjust="spacing">BNSF &amp; UP</text><text x="0" y="0" font-family="Liberation Sans" font-size="8" fill="#333" transform="translate(2233 452) rotate(28)" textLength="48" lengthAdjust="spacing">BNSF ONLY</text></g><rect x="1681" y="273" width="619" height="397" fill="none" stroke="#a8a8a8" stroke-width="1"/><path d="M1990.5 249 V272" stroke="#a0a0a0" stroke-width="1"/><circle cx="1681" cy="273" r="4.4" fill="#ffffff" stroke="#8c8c8c" stroke-width="1.3"/><circle cx="1681" cy="471.5" r="4.4" fill="#ffffff" stroke="#8c8c8c" stroke-width="1.3"/><circle cx="1681" cy="670" r="4.4" fill="#ffffff" stroke="#8c8c8c" stroke-width="1.3"/><circle cx="1990.5" cy="273" r="4.4" fill="#ffffff" stroke="#8c8c8c" stroke-width="1.3"/><circle cx="1990.5" cy="670" r="4.4" fill="#ffffff" stroke="#8c8c8c" stroke-width="1.3"/><circle cx="2300" cy="273" r="4.4" fill="#ffffff" stroke="#8c8c8c" stroke-width="1.3"/><circle cx="2300" cy="471.5" r="4.4" fill="#ffffff" stroke="#8c8c8c" stroke-width="1.3"/><circle cx="2300" cy="670" r="4.4" fill="#ffffff" stroke="#8c8c8c" stroke-width="1.3"/><circle cx="1990" cy="239" r="7" fill="none" stroke="#8c8c8c" stroke-width="2.2"/><path d="M1994 236 L1998 240 L2002 236" fill="none" stroke="#8c8c8c" stroke-width="1.8"/><circle cx="1990" cy="239" r="2.5" fill="none" stroke="#8c8c8c" stroke-width="1.5"/><rect x="2311.5" y="274.5" width="27" height="27" fill="#fafafa" stroke="#c8c8c8"/><path d="M2317 282 H2333 M2317 296 H2333" stroke="#3a7fd0" stroke-width="1.3"/><path d="M2319 293 C2319 284 2331 284 2331 293" fill="none" stroke="#555" stroke-width="1.6"/></svg>
</body></html>
